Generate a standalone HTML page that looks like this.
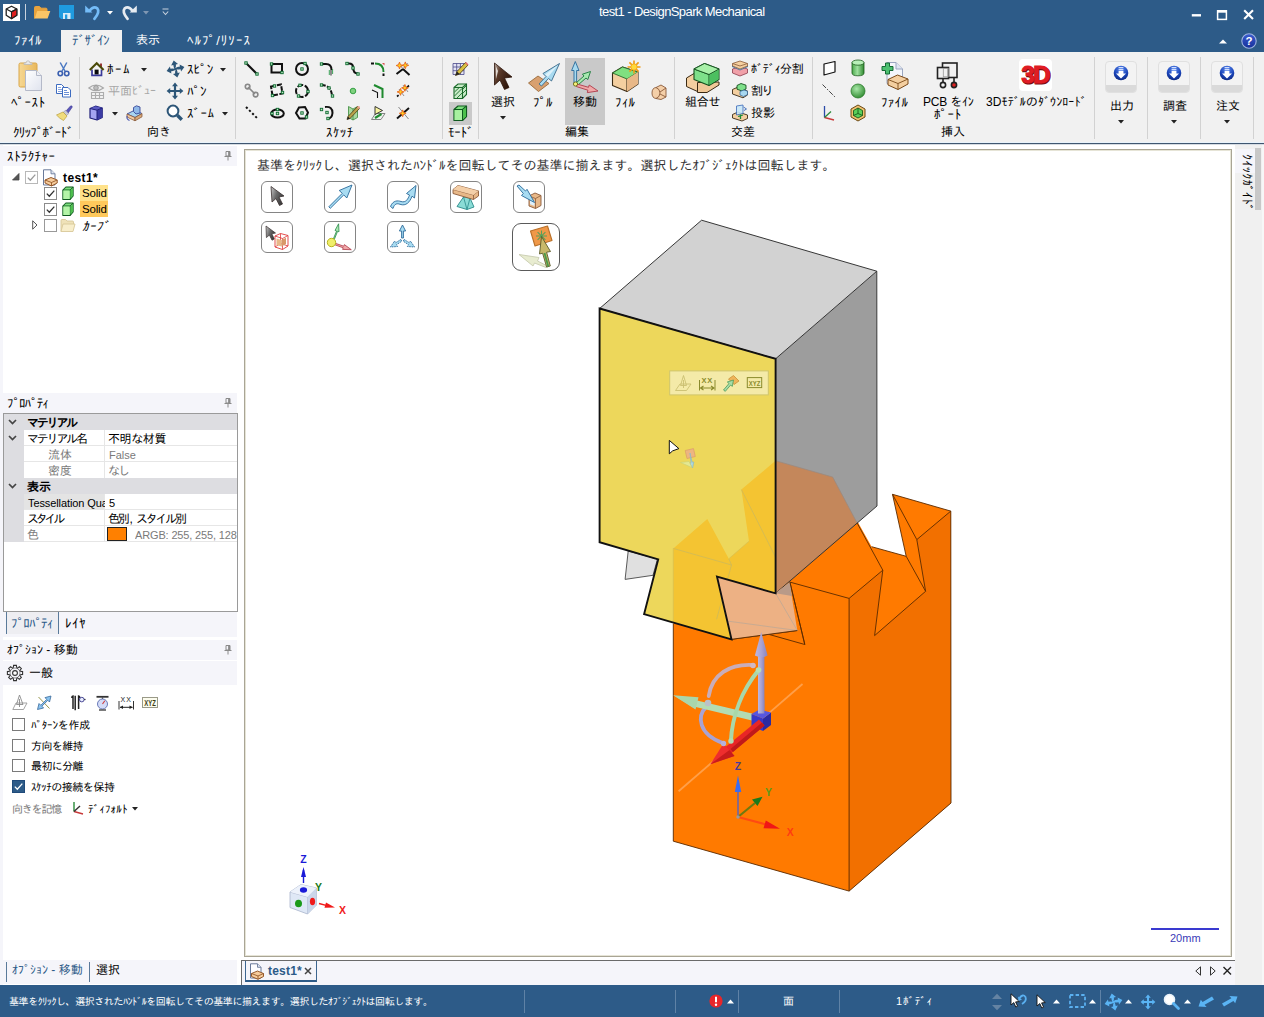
<!DOCTYPE html>
<html lang="ja">
<head>
<meta charset="utf-8">
<title>test1 - DesignSpark Mechanical</title>
<style>
*{box-sizing:border-box;margin:0;padding:0}
html,body{width:1264px;height:1017px;overflow:hidden;background:#fff}
body{position:relative;font-family:"Liberation Sans","IPAGothic",sans-serif;font-size:12px;color:#000}
.a{position:absolute}
.t{position:absolute;white-space:nowrap;line-height:1}
svg{position:absolute;overflow:visible}
#titlebar{left:0;top:0;width:1264px;height:52px;background:#2d5b88}
#ribbon{left:0;top:52px;width:1264px;height:90px;background:#f1f1f1}
#ribline{left:0;top:142px;width:1264px;height:3px;background:linear-gradient(#e9f3fb 0,#e9f3fb 1px,#3f5670 1px,#3f5670 2px,#d5dbe2 2px,#d5dbe2 3px)}
#below{left:0;top:145px;width:1264px;height:840px;background:#fff}
.sep{position:absolute;top:57px;width:1px;height:82px;background:#d2d2d2}
.w{color:#fff}
.g{color:#8a8a8a}
.hdr{position:absolute;left:3px;width:235px;height:17px;background:#eef0f6}
#status{left:0;top:985px;width:1264px;height:32px;background:#2d5b88}
</style>
</head>
<body>
<div class="a" id="titlebar"></div>
<div class="a" id="ribbon"></div>
<div class="a" id="ribline"></div>
<div class="a" id="below"></div>
<!-- title bar -->
<svg class="a" style="left:3px;top:4px" width="17" height="17" viewBox="0 0 17 17"><rect width="17" height="17" fill="#fff"/><path d="M8.5 2.2 L13.8 5 L13.8 11.2 L8.5 14.6 L3.2 11.2 L3.2 5 Z" fill="#fff" stroke="#222" stroke-width="1.3" stroke-linejoin="round"/><path d="M8.5 7.8 L13.8 5 L13.8 11.2 L8.5 14.6 Z" fill="#e02020" stroke="#222" stroke-width="1.1" stroke-linejoin="round"/><path d="M3.2 5 L8.5 7.8 L13.8 5" fill="none" stroke="#222" stroke-width="1.1"/></svg>
<div class="a" style="left:25px;top:4px;width:1px;height:16px;background:#c9d3de"></div>
<svg class="a" style="left:34px;top:6px" width="17" height="13" viewBox="0 0 17 13"><path d="M0.5 12.5 V1.5 Q0.5 0.5 1.5 0.5 H5.5 L7 2.2 H12 Q13 2.2 13 3.2 V5" fill="#e8a33d" stroke="#e8a33d"/><path d="M0.7 12.5 L3.2 5 H16.3 L13.6 12.5 Z" fill="#fbc566"/></svg>
<svg class="a" style="left:59px;top:5px" width="16" height="15" viewBox="0 0 16 15"><path d="M0 0 H15 V14 H2 L0 12 Z" fill="#1f9be0"/><rect x="4" y="8" width="7.5" height="6" fill="#d8ecf8"/><rect x="6" y="9.5" width="2.3" height="4.5" fill="#1f9be0"/></svg>
<svg class="a" style="left:84px;top:4px" width="18" height="17" viewBox="0 0 18 17"><path d="M5.5 6.8 Q9.5 1.6 13.3 4.4 Q16.2 8 10.4 14.8" fill="none" stroke="#74bcf8" stroke-width="2.7" stroke-linecap="round"/><path d="M1.2 1.6 V8.4 H8.4 Z" fill="#74bcf8"/></svg>
<svg class="a" style="left:107px;top:11px" width="6" height="4" viewBox="0 0 6 4"><path d="M0 0 H6 L3 3.4 Z" fill="#fff"/></svg>
<svg class="a" style="left:120px;top:4px" width="18" height="17" viewBox="0 0 18 17"><path d="M12.5 6.8 Q8.5 1.6 4.7 4.4 Q1.8 8 7.6 14.8" fill="none" stroke="#e6ebf1" stroke-width="2.7" stroke-linecap="round"/><path d="M16.8 1.6 V8.4 H9.6 Z" fill="#e6ebf1"/></svg>
<svg class="a" style="left:143px;top:11px" width="6" height="4" viewBox="0 0 6 4"><path d="M0 0 H6 L3 3.4 Z" fill="#7f97b2"/></svg>
<svg class="a" style="left:162px;top:8px" width="7" height="8" viewBox="0 0 7 8"><path d="M0.5 1 H6.5" stroke="#c9d3de" stroke-width="1"/><path d="M0.8 3.5 L3.5 6.5 L6.2 3.5" fill="none" stroke="#c9d3de" stroke-width="1.1"/></svg>
<div class="t w" style="left:599px;top:5px;font-size:13px;letter-spacing:-0.6px;font-family:'Liberation Sans',sans-serif" id="apptitle">test1 - DesignSpark Mechanical</div>
<svg class="a" style="left:1191px;top:9px" width="66" height="12" viewBox="0 0 66 12"><path d="M0.8 6.3 H10" stroke="#fff" stroke-width="2.4"/><rect x="26.6" y="1.8" width="8.8" height="8.6" fill="none" stroke="#fff" stroke-width="1.5"/><path d="M26 2.4 H36" stroke="#fff" stroke-width="2.6"/><path d="M53.2 1.3 L62 10 M62 1.3 L53.2 10" stroke="#fff" stroke-width="2.1"/></svg>
<!-- tabs -->
<div class="a" style="left:61px;top:30px;width:61px;height:23px;background:#f1f1f1"></div>
<div class="t w" style="left:14px;top:33.5px;font-size:13px;letter-spacing:0.5px" id="tab1">ﾌｧｲﾙ</div>
<div class="t" style="left:72px;top:33.5px;font-size:13px;letter-spacing:-0.5px;color:#2d5b88" id="tab2">ﾃﾞｻﾞｲﾝ</div>
<div class="t w" style="left:136px;top:34px" id="tab3">表示</div>
<div class="t w" style="left:187px;top:33.5px;font-size:13px;letter-spacing:1.05px" id="tab4">ﾍﾙﾌﾟ/ﾘｿｰｽ</div>
<svg class="a" style="left:1219px;top:39px" width="8" height="5" viewBox="0 0 8 5"><path d="M0 4.5 L4 0.5 L8 4.5 Z" fill="#fff"/></svg>
<svg class="a" style="left:1241px;top:33px" width="16" height="16" viewBox="0 0 16 16"><defs><linearGradient id="ghelp" x1="0" y1="0" x2="0" y2="1"><stop offset="0" stop-color="#3a5cd0"/><stop offset="1" stop-color="#16309a"/></linearGradient></defs><circle cx="8" cy="8" r="7.2" fill="url(#ghelp)" stroke="#9fb4e0" stroke-width="1.1"/><text x="8" y="12.2" font-size="11.5" font-weight="bold" fill="#fff" text-anchor="middle" font-family="Liberation Sans,sans-serif">?</text></svg>

<!-- ribbon -->
<div class="sep" style="left:79px"></div>
<div class="sep" style="left:235px"></div>
<div class="sep" style="left:442px"></div>
<div class="sep" style="left:478px"></div>
<div class="sep" style="left:674px"></div>
<div class="sep" style="left:812px"></div>
<div class="sep" style="left:1094px"></div>
<div class="sep" style="left:1147px"></div>
<div class="sep" style="left:1200px"></div>
<div class="sep" style="left:1253px"></div>
<svg class="a" style="left:18px;top:60px" width="25" height="32" viewBox="0 0 25 32"><defs><linearGradient id="gcb" x1="0" x2="1"><stop offset="0" stop-color="#f6d894"/><stop offset="1" stop-color="#e9b85c"/></linearGradient><linearGradient id="gpp" x1="0" y1="0" x2="1" y2="1"><stop offset="0" stop-color="#fff"/><stop offset="1" stop-color="#dfe3ee"/></linearGradient></defs>
<rect x="1" y="3" width="18" height="24" rx="1.5" fill="url(#gcb)" stroke="#d9a648"/>
<path d="M6 4.5 V3 H8 Q8 0.8 10 0.8 Q12 0.8 12 3 H14 V4.5 Z" fill="#e8e8e8" stroke="#b9b9b9" stroke-width="0.8"/>
<path d="M7.5 10.5 H18.5 L23.5 15.5 V30.5 H7.5 Z" fill="url(#gpp)" stroke="#b4b9c8"/><path d="M18.5 10.5 V15.5 H23.5" fill="#eef0f6" stroke="#b4b9c8"/></svg>
<div class="t" style="left:11px;top:95.5px;;font-size:13px;letter-spacing:0.50px">ﾍﾟｰｽﾄ</div>
<svg class="a" style="left:57px;top:62px" width="13" height="15" viewBox="0 0 13 15"><path d="M3.2 0.5 L8.2 9.5 M9.8 0.5 L4.8 9.5" stroke="#4a78c2" stroke-width="1.5" fill="none"/><circle cx="3.3" cy="11.5" r="2.2" fill="none" stroke="#3a5fb0" stroke-width="1.6"/><circle cx="9.7" cy="11.5" r="2.2" fill="none" stroke="#3a5fb0" stroke-width="1.6"/></svg>
<svg class="a" style="left:56px;top:84px" width="16" height="14" viewBox="0 0 16 14"><path d="M0.5 0.5 H5.5 L8 3 V9.5 H0.5 Z" fill="#fff" stroke="#3e6cc0"/><path d="M2 3.5 H5 M2 5.5 H6.5 M2 7.5 H6.5" stroke="#7a9ad8" stroke-width="0.9"/><path d="M6.5 3.5 H12 L14.5 6 V13 H6.5 Z" fill="#fff" stroke="#3e6cc0"/><path d="M8 6.5 H11 M8 8.5 H13 M8 10.5 H13" stroke="#5a82d0" stroke-width="0.9"/></svg>
<svg class="a" style="left:56px;top:105px" width="17" height="16" viewBox="0 0 17 16"><path d="M9.5 6.5 L14.5 1 Q16 0.3 16.3 2 L11.8 8.5 Z" fill="#5b57b8" stroke="#3e3a94" stroke-width="0.6"/><path d="M7.2 7.2 L9.8 5.2 L12.6 8.6 L10.6 10.6 Z" fill="#c9c9d6" stroke="#8a8aa0" stroke-width="0.6"/><path d="M0.5 10 L7 7 L11 11 L7.5 15.5 Q3.5 13.5 0.5 10 Z" fill="#f0dc7c" stroke="#b99e3c" stroke-width="0.7"/></svg>
<div class="t" style="left:13px;top:125.5px;;font-size:13px;letter-spacing:-0.75px">ｸﾘｯﾌﾟﾎﾞｰﾄﾞ</div>
<svg class="a" style="left:89px;top:61px" width="16" height="16" viewBox="0 0 16 16"><path d="M3 8.5 V14.3 H12.5 V8.5" fill="#fff" stroke="#3a3a9a" stroke-width="1.7"/><rect x="5.6" y="8.6" width="4" height="4.8" fill="#0a0a0a"/><path d="M12 2.4 V7" stroke="#8a1414" stroke-width="1.7"/><path d="M0.8 9 L7.7 2.2 L14.6 9" fill="none" stroke="#4a4a08" stroke-width="2.1" stroke-linejoin="miter"/></svg>
<div class="t" style="left:107px;top:62.5px;;font-size:13px;letter-spacing:1.50px">ﾎｰﾑ</div>
<svg class="a" style="left:141px;top:68px" width="6" height="4" viewBox="0 0 6 4"><path d="M0 0 H6 L3 3.4 Z" fill="#222"/></svg>
<svg class="a" style="left:88px;top:83px" width="17" height="16" viewBox="0 0 17 16"><path d="M0.8 5 Q8 -1 15.5 5 Q8 10.5 0.8 5 Z" fill="#ececec" stroke="#a8a8a8" stroke-width="1.1"/><circle cx="8" cy="4.8" r="2.3" fill="#bdbdbd" stroke="#9a9a9a"/><path d="M3.5 9.5 H15.5 V15.5 H3.5 Z M7.5 9.5 V15.5 M11.5 9.5 V15.5 M3.5 12.5 H15.5" fill="none" stroke="#adadad" stroke-width="1.1"/></svg>
<div class="t" style="left:108px;top:85px;color:#a7a7a7">平面ﾋﾞｭｰ</div>
<svg class="a" style="left:89px;top:105px" width="15" height="16" viewBox="0 0 15 16"><path d="M1 3.5 L6.5 1.2 L13.2 3 V12.5 L8 15 L1 13 Z" fill="#a4a4f2" stroke="#1e1e78" stroke-width="1.2" stroke-linejoin="round"/><path d="M8 5.2 L13.2 3 V12.5 L8 15 Z" fill="#3c3ca4"/><path d="M1 3.5 L6.5 1.2 L13.2 3 L8 5.2 Z" fill="#5a5ac0"/><path d="M1 3.5 L8 5.2 L13.2 3 M8 5.2 V15" fill="none" stroke="#1e1e78" stroke-width="1"/></svg>
<svg class="a" style="left:112px;top:112px" width="6" height="4" viewBox="0 0 6 4"><path d="M0 0 H6 L3 3.4 Z" fill="#222"/></svg>
<svg class="a" style="left:126px;top:105px" width="18" height="17" viewBox="0 0 18 17"><path d="M1 9 L8 5.5 L16 8.5 L9 12.5 Z" fill="#a8d4f0" stroke="#3a4a9a" stroke-width="0.9"/><path d="M1 9 V12 L9 15.8 V12.5 Z" fill="#f0c8a0" stroke="#8a5a3a" stroke-width="0.8"/><path d="M9 12.5 V15.8 L16 11.8 V8.5 Z" fill="#d8a878" stroke="#8a5a3a" stroke-width="0.8"/><path d="M7.5 2.5 L10.5 0.8 L14 2 V8 L10 9 L7.5 6.5 Z" fill="#8fb8e8" stroke="#3a4a9a" stroke-width="0.9"/><path d="M1.2 11 Q0 14 3.5 15.5" fill="none" stroke="#4a58b0" stroke-width="1.1"/></svg>
<svg class="a" style="left:166px;top:60px" width="19" height="18" viewBox="0 0 19 18"><g transform="rotate(-12 9.5 9)" fill="#2d5678"><path d="M9.5 0.4 L13 4.6 H10.8 Q10.9 6.6 9.6 7.9 Q11.6 7.4 14.4 7.6 V5.4 L18.6 9 L14.4 12.6 V10.4 Q12 10.3 10.6 9.4 Q11 11.4 10.8 13.4 H13 L9.5 17.6 L6 13.4 H8.2 Q8.2 11.4 9.4 10.1 Q7.4 10.6 4.6 10.4 V12.6 L0.4 9 L4.6 5.4 V7.6 Q7 7.7 8.4 8.6 Q8 6.6 8.2 4.6 H6 Z"/></g></svg>
<div class="t" style="left:187px;top:62.5px;;font-size:13px;letter-spacing:0.10px">ｽﾋﾟﾝ</div>
<svg class="a" style="left:220px;top:68px" width="6" height="4" viewBox="0 0 6 4"><path d="M0 0 H6 L3 3.4 Z" fill="#222"/></svg>
<svg class="a" style="left:166px;top:82px" width="18" height="18" viewBox="0 0 18 18"><path d="M9 0.6 L12 4.2 H10.1 V7.9 H13.8 V6 L17.4 9 L13.8 12 V10.1 H10.1 V13.8 H12 L9 17.4 L6 13.8 H7.9 V10.1 H4.2 V12 L0.6 9 L4.2 6 V7.9 H7.9 V4.2 H6 Z" fill="#2d5678"/></svg>
<div class="t" style="left:187px;top:84.5px;;font-size:13px;letter-spacing:0.00px">ﾊﾟﾝ</div>
<svg class="a" style="left:166px;top:104px" width="18" height="18" viewBox="0 0 18 18"><circle cx="7" cy="7" r="5.4" fill="#fff" stroke="#2d5678" stroke-width="2"/><path d="M11.3 11.3 L15.8 15.8" stroke="#2d5678" stroke-width="3.4" stroke-linecap="butt"/></svg>
<div class="t" style="left:187px;top:106.5px;;font-size:13px;letter-spacing:0.50px">ｽﾞｰﾑ</div>
<svg class="a" style="left:222px;top:112px" width="6" height="4" viewBox="0 0 6 4"><path d="M0 0 H6 L3 3.4 Z" fill="#222"/></svg>
<div class="t" style="left:147px;top:126px;">向き</div>
<!-- sketch -->
<svg class="a" style="left:244px;top:61px" width="16" height="16" viewBox="0 0 16 16"><path d="M2 2 L13 13" stroke="#111" stroke-width="2" fill="none"/><rect x="0.8" y="0.8" width="2.4" height="2.4" fill="#bfe3c4" stroke="#0b6b2e" stroke-width="0.9"/><rect x="11.8" y="11.8" width="2.4" height="2.4" fill="#bfe3c4" stroke="#0b6b2e" stroke-width="0.9"/></svg>
<svg class="a" style="left:269px;top:61px" width="16" height="16" viewBox="0 0 16 16"><rect x="2.5" y="3" width="10.5" height="8.5" stroke="#111" stroke-width="2" fill="none"/><rect x="1.3" y="1.8" width="2.4" height="2.4" fill="#bfe3c4" stroke="#0b6b2e" stroke-width="0.9"/><rect x="11.8" y="10.3" width="2.4" height="2.4" fill="#bfe3c4" stroke="#0b6b2e" stroke-width="0.9"/></svg>
<svg class="a" style="left:294px;top:61px" width="16" height="16" viewBox="0 0 16 16"><circle cx="8" cy="8" r="6" stroke="#111" stroke-width="2" fill="none"/><rect x="6.8" y="6.8" width="2.4" height="2.4" fill="#bfe3c4" stroke="#0b6b2e" stroke-width="0.9"/><rect x="9.8" y="1.3" width="2.4" height="2.4" fill="#bfe3c4" stroke="#0b6b2e" stroke-width="0.9"/></svg>
<svg class="a" style="left:319px;top:61px" width="16" height="16" viewBox="0 0 16 16"><path d="M2.5 3 H7 Q12.5 3 12.5 9" stroke="#111" stroke-width="2" fill="none"/><path d="M10.3 9 V14 M13.6 8 V13" stroke="#2a9a4a" stroke-width="0.9"/><path d="M12 9 V14.5" stroke="#555" stroke-width="1.3"/><rect x="1.3" y="1.8" width="2.4" height="2.4" fill="#bfe3c4" stroke="#0b6b2e" stroke-width="0.9"/></svg>
<svg class="a" style="left:345px;top:61px" width="16" height="16" viewBox="0 0 16 16"><path d="M2 2.5 H4 Q8 2.5 8 6 Q8 12.5 13 12.5" stroke="#111" stroke-width="2" fill="none"/><rect x="0.8" y="1.3" width="2.4" height="2.4" fill="#bfe3c4" stroke="#0b6b2e" stroke-width="0.9"/><rect x="6.8" y="5.8" width="2.4" height="2.4" fill="#bfe3c4" stroke="#0b6b2e" stroke-width="0.9"/><rect x="11.8" y="11.8" width="2.4" height="2.4" fill="#bfe3c4" stroke="#0b6b2e" stroke-width="0.9"/></svg>
<svg class="a" style="left:370px;top:61px" width="16" height="16" viewBox="0 0 16 16"><path d="M1 2.5 H4" stroke="#111" stroke-width="2" fill="none"/><path d="M5 2.5 Q13.5 2.5 13.5 11" fill="none" stroke="#1f8a2f" stroke-width="1.9"/><path d="M13.5 12.5 V15" stroke="#111" stroke-width="2" fill="none"/><path d="M12 2 L14.5 2 L14.5 4.5 Z" fill="#d9534f"/></svg>
<svg class="a" style="left:395px;top:61px" width="16" height="16" viewBox="0 0 16 16"><path d="M1.5 13 L8 8 L14.5 14" stroke="#111" stroke-width="2" fill="none"/><path d="M4 2.5 L8 8 L12.5 2" fill="none" stroke="#888" stroke-width="1"/><path d="M3.6 3.6 l0.9 -2.5 l0.9 2.5 l2.5 0.9 l-2.5 0.9 l-0.9 2.5 l-0.9 -2.5 l-2.5 -0.9 Z" fill="#ffd21e" stroke="#e8641e" stroke-width="0.9"/><path d="M9.4 3.4 l0.9 -2.5 l0.9 2.5 l2.5 0.9 l-2.5 0.9 l-0.9 2.5 l-0.9 -2.5 l-2.5 -0.9 Z" fill="#ffd21e" stroke="#e8641e" stroke-width="0.9"/></svg>
<svg class="a" style="left:244px;top:83px" width="16" height="16" viewBox="0 0 16 16"><path d="M4 4 L11 11" stroke="#888" stroke-width="1.7"/><circle cx="3.6" cy="3.6" r="2.3" fill="none" stroke="#888" stroke-width="1.6"/><circle cx="11.6" cy="11.6" r="2.3" fill="none" stroke="#888" stroke-width="1.6"/></svg>
<svg class="a" style="left:269px;top:83px" width="16" height="16" viewBox="0 0 16 16"><path d="M2 3.5 L12 1.5 L13.5 10.5 L3.5 12.5 Z" stroke="#111" stroke-width="2" fill="none" stroke-dasharray="4.5 1.5"/><rect x="4.3" y="1.8" width="2.4" height="2.4" fill="#bfe3c4" stroke="#0b6b2e" stroke-width="0.9"/><rect x="12.3" y="8.3" width="2.4" height="2.4" fill="#bfe3c4" stroke="#0b6b2e" stroke-width="0.9"/><rect x="2.3" y="11.3" width="2.4" height="2.4" fill="#bfe3c4" stroke="#0b6b2e" stroke-width="0.9"/></svg>
<svg class="a" style="left:294px;top:83px" width="16" height="16" viewBox="0 0 16 16"><circle cx="8" cy="8" r="6" stroke="#111" stroke-width="2" fill="none" stroke-dasharray="6 1.6"/><rect x="4.8" y="1.0999999999999999" width="2.4" height="2.4" fill="#bfe3c4" stroke="#0b6b2e" stroke-width="0.9"/><rect x="12.8" y="7.3" width="2.4" height="2.4" fill="#bfe3c4" stroke="#0b6b2e" stroke-width="0.9"/><rect x="3.3" y="11.8" width="2.4" height="2.4" fill="#bfe3c4" stroke="#0b6b2e" stroke-width="0.9"/></svg>
<svg class="a" style="left:319px;top:83px" width="16" height="16" viewBox="0 0 16 16"><path d="M2.5 2 Q12.5 2.5 13 13" stroke="#111" stroke-width="2" fill="none" stroke-dasharray="4.2 1.4"/><rect x="1.3" y="0.8" width="2.4" height="2.4" fill="#bfe3c4" stroke="#0b6b2e" stroke-width="0.9"/><rect x="8.8" y="3.8" width="2.4" height="2.4" fill="#bfe3c4" stroke="#0b6b2e" stroke-width="0.9"/><rect x="12.3" y="11.8" width="2.4" height="2.4" fill="#bfe3c4" stroke="#0b6b2e" stroke-width="0.9"/></svg>
<svg class="a" style="left:345px;top:83px" width="16" height="16" viewBox="0 0 16 16"><circle cx="8" cy="8" r="2.8" fill="#7ed07e" stroke="#2a9a3a" stroke-width="0.9"/></svg>
<svg class="a" style="left:370px;top:83px" width="16" height="16" viewBox="0 0 16 16"><path d="M4 2 L12.5 6 V15" fill="none" stroke="#1f8a2f" stroke-width="2"/><path d="M2 7 L7.5 9.5 V15" fill="none" stroke="#111" stroke-width="1.1"/></svg>
<svg class="a" style="left:395px;top:83px" width="16" height="16" viewBox="0 0 16 16"><path d="M2 13.5 L14 2.5" stroke="#111" stroke-width="1.7" stroke-dasharray="2.2 7.5 5 0"/><path d="M4 6 L9 13 M8 2 L13 9" stroke="#888" stroke-width="0.9"/><path d="M4.6 8 l0.9 -2.5 l0.9 2.5 l2.5 0.9 l-2.5 0.9 l-0.9 2.5 l-0.9 -2.5 l-2.5 -0.9 Z" fill="#ffd21e" stroke="#e8641e" stroke-width="0.9"/><path d="M9 4 l0.9 -2.5 l0.9 2.5 l2.5 0.9 l-2.5 0.9 l-0.9 2.5 l-0.9 -2.5 l-2.5 -0.9 Z" fill="#ffd21e" stroke="#e8641e" stroke-width="0.9"/></svg>
<svg class="a" style="left:244px;top:105px" width="16" height="16" viewBox="0 0 16 16"><path d="M2 2 L13.5 13.5" stroke="#111" stroke-width="2" fill="none" stroke-dasharray="2.2 2.2"/></svg>
<svg class="a" style="left:269px;top:105px" width="16" height="16" viewBox="0 0 16 16"><ellipse cx="8.5" cy="8.5" rx="6.3" ry="4" stroke="#111" stroke-width="2" fill="none"/><rect x="7.3" y="3.3" width="2.4" height="2.4" fill="#bfe3c4" stroke="#0b6b2e" stroke-width="0.9"/><rect x="1.8" y="7.3" width="2.4" height="2.4" fill="#bfe3c4" stroke="#0b6b2e" stroke-width="0.9"/><rect x="7.3" y="7.3" width="2.4" height="2.4" fill="#bfe3c4" stroke="#0b6b2e" stroke-width="0.9"/></svg>
<svg class="a" style="left:294px;top:105px" width="16" height="16" viewBox="0 0 16 16"><path d="M5 2.5 L11 2 L14 7.5 L11.5 13.5 L5.5 13.5 L2 8 Z" stroke="#111" stroke-width="2" fill="none"/><rect x="6.8" y="6.8" width="2.4" height="2.4" fill="#bfe3c4" stroke="#0b6b2e" stroke-width="0.9"/><rect x="11.3" y="10.8" width="2.4" height="2.4" fill="#bfe3c4" stroke="#0b6b2e" stroke-width="0.9"/></svg>
<svg class="a" style="left:319px;top:105px" width="16" height="16" viewBox="0 0 16 16"><path d="M6 2 Q13.5 1 13.5 8 Q13 13 9.5 13.5" stroke="#111" stroke-width="2" fill="none"/><rect x="1.3" y="3.3" width="2.4" height="2.4" fill="#bfe3c4" stroke="#0b6b2e" stroke-width="0.9"/><rect x="6.8" y="6.3" width="2.4" height="2.4" fill="#bfe3c4" stroke="#0b6b2e" stroke-width="0.9"/><rect x="7.8" y="12.3" width="2.4" height="2.4" fill="#bfe3c4" stroke="#0b6b2e" stroke-width="0.9"/></svg>
<svg class="a" style="left:345px;top:105px" width="16" height="16" viewBox="0 0 16 16"><path d="M3.5 1.5 L8 4 V15 L3.5 12.5 Z M8 4 L12.5 1.5 V12.5 L8 15" fill="#a8d8a0" stroke="#3a8a3a" stroke-width="0.8"/><path d="M2 14.5 L3 11.5 L12.5 1.5 L14.5 3.5 L5 13.5 Z" fill="#b9a24a" stroke="#4a3a14" stroke-width="0.8"/><path d="M2 14.5 L3 11.5 L5 13.5 Z" fill="#222"/><circle cx="13.6" cy="2.4" r="1.3" fill="#e8a090"/></svg>
<svg class="a" style="left:370px;top:105px" width="16" height="16" viewBox="0 0 16 16"><path d="M1.5 14.5 L5.5 8.5 H15 L11 14.5 Z" fill="#eef3ee" stroke="#777" stroke-width="0.9"/><path d="M5 1.5 L12.5 5.5 L5 9.5 Z" fill="#f7f3a0" stroke="#222" stroke-width="0.9"/><path d="M5 13 L11.5 9" stroke="#1f8a2f" stroke-width="2.2"/></svg>
<svg class="a" style="left:395px;top:105px" width="16" height="16" viewBox="0 0 16 16"><path d="M2 13.5 L14 3" stroke="#111" stroke-width="1.9"/><path d="M3.5 2 L13.5 14" stroke="#888" stroke-width="1"/><path d="M6.8 7.4 l0.9 -2.5 l0.9 2.5 l2.5 0.9 l-2.5 0.9 l-0.9 2.5 l-0.9 -2.5 l-2.5 -0.9 Z" fill="#ffd21e" stroke="#e8641e" stroke-width="0.9"/></svg>
<div class="t" style="left:326px;top:125.5px;;font-size:13px;letter-spacing:0.40px">ｽｹｯﾁ</div>
<div class="a" style="left:449px;top:102px;width:23px;height:23px;background:#c9c9c9"></div>
<svg class="a" style="left:452px;top:61px" width="17" height="17" viewBox="0 0 17 17"><path d="M1 2.5 H12 V13.5 H1 Z M1 6 H12 M1 9.7 H12 M4.7 2.5 V13.5 M8.4 2.5 V13.5" fill="#e4e4f4" stroke="#4a4a8a" stroke-width="0.8"/><path d="M3.5 14.5 L5 10.5 L13.5 1.5 L16 4 L7.5 13 Z" fill="#d8c040" stroke="#4a3a14" stroke-width="0.8"/><path d="M3.5 14.5 L5 10.5 L7.5 13 Z" fill="#222"/><path d="M13.5 1.5 L16 4" stroke="#e06a6a" stroke-width="1.6"/></svg>
<svg class="a" style="left:453px;top:83px" width="15" height="17" viewBox="0 0 15 17"><path d="M1 4.5 L5 1 H13.5 V11.5 L9.5 15.5 H1 Z" fill="#c8ecc8" stroke="#1a6a2a" stroke-width="1.1"/><path d="M1 4.5 H9.5 V15.5 M9.5 4.5 L13.5 1" fill="none" stroke="#1a6a2a" stroke-width="1.1"/><path d="M1.5 9 L6 4.8 M1.5 13 L9 5.5 M4 15 L9.3 9.8 M10 6 L13 3 M10 10 L13 7" stroke="#1a6a2a" stroke-width="0.9"/></svg>
<svg class="a" style="left:453px;top:105px" width="15" height="17" viewBox="0 0 15 17"><path d="M1 4.5 L5 1 H13.5 V11.5 L9.5 15.5 H1 Z" fill="#7ee07e" stroke="#0f5a1f" stroke-width="1.2" stroke-linejoin="round"/><path d="M1 4.5 H9.5 V15.5 M9.5 4.5 L13.5 1" fill="none" stroke="#0f5a1f" stroke-width="1.1"/><path d="M1.6 5.1 H9 V15 H1.6 Z" fill="#a8f0a0"/><path d="M10 5 L13 2.2 V11.3 L10 14.3 Z" fill="#4cc04c"/></svg>
<div class="t" style="left:448px;top:125.5px;;font-size:13px;letter-spacing:-0.20px">ﾓｰﾄﾞ</div>
<!-- edit -->
<div class="a" style="left:565px;top:58px;width:40px;height:67px;background:#c9c9c9"></div>
<svg class="a" style="left:493px;top:62px" width="21" height="29" viewBox="0 0 21 29"><defs><linearGradient id="gsel" x1="0" y1="0" x2="1" y2="0.6"><stop offset="0" stop-color="#b8aaa0"/><stop offset="0.35" stop-color="#5a3a2a"/><stop offset="1" stop-color="#2a1208"/></linearGradient></defs><path d="M1.5 1 L19 15 L11.5 16 L16 25.5 L11.5 27.5 L7 18 L1.5 23 Z" fill="url(#gsel)" stroke="#2a1208" stroke-width="0.8" stroke-linejoin="round"/><path d="M3 4.5 L3 17 L5 9 Z" fill="#f4f0ec" opacity="0.85"/></svg>
<div class="t" style="left:491px;top:96px;">選択</div>
<svg class="a" style="left:500px;top:116px" width="6" height="4" viewBox="0 0 6 4"><path d="M0 0 H6 L3 3.4 Z" fill="#222"/></svg>
<svg class="a" style="left:527px;top:62px" width="34" height="31" viewBox="0 0 34 31"><path d="M1.5 21 L11 14 L22 21.5 L11.5 29.5 Z" fill="#d8a070" stroke="#9a6a3a" stroke-width="0.9"/><path d="M12 22 L19 14.5 L16 11.5 L32.5 1.5 L24.5 19 L21.5 16.5 L14.5 24 Z" fill="#a8daf0" stroke="#3a6a8a" stroke-width="0.9" stroke-linejoin="round"/><path d="M18 12.5 L31 3 L21 15 Z" fill="#e8f6fc" opacity="0.8"/></svg>
<div class="t" style="left:533px;top:95.5px;;font-size:13px;letter-spacing:0.00px">ﾌﾟﾙ</div>
<svg class="a" style="left:568px;top:60px" width="32" height="34" viewBox="0 0 32 34"><path d="M6 23 V10.5 H3.6 L7.3 1.5 L11 10.5 H8.6 V23 Z" fill="#a8daf0" stroke="#2a6a9a" stroke-width="0.9"/><path d="M8.5 22.5 L16 16 L14.4 14.2 L22.5 11.5 L19.8 19.6 L18 18 L10 25 Z" fill="#a8e8b0" stroke="#1a7a3a" stroke-width="0.9"/><path d="M9 24 L20.5 27.3 L21.2 25 L30 31 L19.3 32.6 L19.9 30.2 L8.5 26.6 Z" fill="#f0a8a8" stroke="#b03a4a" stroke-width="0.9"/><circle cx="7.5" cy="24" r="2.1" fill="#f4f07a" stroke="#6a6a14" stroke-width="0.9"/></svg>
<div class="t" style="left:573px;top:96px;">移動</div>
<svg class="a" style="left:611px;top:59px" width="33" height="34" viewBox="0 0 33 34"><path d="M1.5 14 L11.5 8 L27 13 V25 L16 32.5 L1.5 26.5 Z" fill="#f4cfa0" stroke="#3a2a14" stroke-width="1.1" stroke-linejoin="round"/><path d="M1.5 14 L11.5 8 L27 13 L16 20 Z" fill="#80e080" stroke="#2a6a2a" stroke-width="0.9"/><path d="M16 20 V32.5" stroke="#3a2a14" stroke-width="1.1"/><path d="M16 20 L27 13 V25 L16 32.5 Z" fill="#e8b888"/><g stroke="#f09a14" stroke-width="1.6"><path d="M23 1.5 V14.5 M16.5 8 H29.5 M18.4 3.4 L27.6 12.6 M27.6 3.4 L18.4 12.6"/></g><circle cx="23" cy="8" r="3.2" fill="#ffd83a" stroke="#f0a014" stroke-width="0.8"/></svg>
<div class="t" style="left:615px;top:95.5px;;font-size:13px;letter-spacing:0.20px">ﾌｨﾙ</div>
<svg class="a" style="left:651px;top:84px" width="16" height="17" viewBox="0 0 16 17"><path d="M1 9 Q1 4 5 3.5 L10 1 L15 4 V13 L10 15.5 L5 14.5 Q1 14 1 9 Z" fill="#f4cfa8" stroke="#8a5a3a" stroke-width="0.9"/><path d="M5 3.5 Q9 5 9 9 Q9 13 5 14.5 M9 8 L15 4 M9 10 L15 13" fill="none" stroke="#8a5a3a" stroke-width="0.9"/></svg>
<div class="t" style="left:565px;top:126px;">編集</div>
<!-- intersect -->
<svg class="a" style="left:685px;top:62px" width="36" height="32" viewBox="0 0 36 32"><path d="M1.5 16 L9 11.5 L20 15.5 V24 L12.5 29.5 L1.5 24.5 Z" fill="#f4cfa0" stroke="#3a2a14" stroke-width="1" stroke-linejoin="round"/><path d="M12.5 20.5 L34 20 V23 L22 30.5 H12.5 Z" fill="#f0c898" stroke="#3a2a14" stroke-width="1"/><path d="M9 7 L19.5 1.5 L34 7 V17.5 L24 23.5 L9 17.5 Z" fill="#7ee08a" stroke="#14501e" stroke-width="1.1" stroke-linejoin="round"/><path d="M9 7 L24 12.5 L34 7 M24 12.5 V23.5" fill="none" stroke="#14501e" stroke-width="1"/><path d="M9 7 L19.5 1.5 L34 7 L24 12.5 Z" fill="#a8f0a8" stroke="#14501e" stroke-width="0.9"/><path d="M24.5 13 L33.5 7.8 V17.2 L24.5 22.8 Z" fill="#4cc060"/></svg>
<div class="t" style="left:685px;top:96px;letter-spacing:-0.3px">組合せ</div>
<svg class="a" style="left:731px;top:60px" width="18" height="17" viewBox="0 0 18 17"><path d="M1.5 9 L9 6.5 L16.5 9 V13 L9 16 L1.5 13 Z" fill="#f0a0a8" stroke="#8a3a4a" stroke-width="0.8"/><path d="M1 6.5 L9 3.8 L17 6.5 L9 10 Z" fill="#a8d8f0" stroke="#3a6a9a" stroke-width="0.8"/><path d="M1.5 3.5 L9 1 L16.5 3.5 V6 L9 9 L1.5 6 Z" fill="#f4cfa0" stroke="#8a5a3a" stroke-width="0.8"/><path d="M1.5 3.5 L9 6 L16.5 3.5" fill="none" stroke="#8a5a3a" stroke-width="0.8"/></svg>
<div class="t" style="left:751px;top:63px;letter-spacing:-0.3px">ﾎﾞﾃﾞｨ分割</div>
<svg class="a" style="left:731px;top:82px" width="18" height="17" viewBox="0 0 18 17"><path d="M1.5 7.5 L6 5.5 L16.5 9 V13 L12 15.8 L1.5 12 Z" fill="#f4cfa0" stroke="#3a2a14" stroke-width="0.9"/><path d="M6 3.5 L10 1.5 L15 3.2 V7 L11 9 L6 7.2 Z" fill="#7ee08a" stroke="#14501e" stroke-width="0.9"/><path d="M9 9.5 L13 8 L16.5 9.2 V12.6 L12.5 14.5 L9 13 Z" fill="#a8d8f0" stroke="#3a6a9a" stroke-width="0.8"/></svg>
<div class="t" style="left:751px;top:85px;letter-spacing:-1.5px">割り</div>
<svg class="a" style="left:731px;top:104px" width="18" height="18" viewBox="0 0 18 18"><path d="M1.5 10.5 L7 8 L16.5 11 V14.5 L11 17 L1.5 14 Z" fill="#f4cfa0" stroke="#3a2a14" stroke-width="0.9"/><path d="M5.5 2 L12 1 V9.5 L5.5 11 Z" fill="#c8e8f8" stroke="#3a6aba" stroke-width="0.9" opacity="0.9"/><path d="M7 12.5 L12 11 M9.5 10.5 V15" stroke="#1a8a3a" stroke-width="1.3"/><path d="M12.5 3 L15.5 5 L13 6.5" fill="none" stroke="#3a6aba" stroke-width="0.9"/></svg>
<div class="t" style="left:751px;top:107px;">投影</div>
<div class="t" style="left:731px;top:126px;">交差</div>
<!-- insert -->
<svg class="a" style="left:822px;top:60px" width="15" height="16" viewBox="0 0 15 16"><path d="M2 4 L13 1.5 V12 L2 15 Z" fill="#fff" stroke="#111" stroke-width="1.2" stroke-linejoin="round"/></svg>
<svg class="a" style="left:821px;top:83px" width="16" height="16" viewBox="0 0 16 16"><path d="M1.5 1.5 L14.5 14.5" stroke="#444" stroke-width="1" stroke-dasharray="5 1.5 1.5 1.5"/></svg>
<svg class="a" style="left:822px;top:105px" width="14" height="16" viewBox="0 0 14 16"><path d="M2.5 1 V12.5" stroke="#2a4aa8" stroke-width="1.3"/><path d="M2.5 12.5 L12 15" stroke="#c83a3a" stroke-width="1.3"/><path d="M2.5 12.5 L9 6.5" stroke="#2a8a3a" stroke-width="1.3"/></svg>
<svg class="a" style="left:851px;top:59px" width="14" height="18" viewBox="0 0 14 18"><defs><linearGradient id="gcy" x1="0" x2="1"><stop offset="0" stop-color="#4aa84a"/><stop offset="0.45" stop-color="#9ee09e"/><stop offset="1" stop-color="#2f8a2f"/></linearGradient><radialGradient id="gsp" cx="0.4" cy="0.35" r="0.7"><stop offset="0" stop-color="#a8e8a8"/><stop offset="1" stop-color="#2f8a2f"/></radialGradient></defs><path d="M1 3.5 V14 Q1 16.8 7 16.8 Q13 16.8 13 14 V3.5 Z" fill="url(#gcy)" stroke="#1a5a1a" stroke-width="0.8"/><ellipse cx="7" cy="3.6" rx="6" ry="2.6" fill="#b8f0b8" stroke="#1a5a1a" stroke-width="0.8"/></svg>
<svg class="a" style="left:850px;top:83px" width="16" height="16" viewBox="0 0 16 16"><circle cx="8" cy="8" r="7" fill="url(#gsp)" stroke="#2a7a2a" stroke-width="0.8"/></svg>
<svg class="a" style="left:850px;top:104px" width="16" height="18" viewBox="0 0 16 18"><path d="M8 1 L15 5 V13 L8 17 L1 13 V5 Z" fill="#f0c070" stroke="#6a4a14" stroke-width="1"/><path d="M8 4 L12.5 6.5 V11.5 L8 14 L3.5 11.5 V6.5 Z" fill="#5ad05a" stroke="#1a5a1a" stroke-width="0.9"/><path d="M8 4 V9.5 L12.5 11.5 M8 9.5 L3.5 11.5" fill="none" stroke="#1a5a1a" stroke-width="0.9"/></svg>
<svg class="a" style="left:881px;top:61px" width="28" height="30" viewBox="0 0 28 30"><path d="M6 1.5 H15 L21.5 8 V22.5 H6 Z" fill="#f4f6fb" stroke="#9aa6c0" stroke-width="1"/><path d="M15 1.5 V8 H21.5" fill="#dfe5f2" stroke="#9aa6c0" stroke-width="1"/><path d="M7 18.5 L16.5 14 L27 18 V23 L17 28.5 L7 24 Z" fill="#f4cfa0" stroke="#7a4a1a" stroke-width="1" stroke-linejoin="round"/><path d="M7 18.5 L17 22.5 L27 18 M17 22.5 V28.5" fill="none" stroke="#7a4a1a" stroke-width="0.9"/><path d="M4.5 2 H8.5 V5.5 H12 V9.5 H8.5 V13 H4.5 V9.5 H1 V5.5 H4.5 Z" fill="#4cc070" stroke="#146a34" stroke-width="1"/></svg>
<div class="t" style="left:881px;top:95.5px;;font-size:13px;letter-spacing:0.30px">ﾌｧｲﾙ</div>
<svg class="a" style="left:935px;top:61px" width="28" height="30" viewBox="0 0 28 30"><rect x="7.5" y="2" width="14.5" height="14.5" fill="none" stroke="#222" stroke-width="1.6"/><rect x="2.5" y="6.5" width="11" height="11" fill="#f1f1f1" stroke="#222" stroke-width="1.6"/><rect x="8.3" y="7.3" width="5" height="8.5" fill="none" stroke="#999" stroke-width="0.8"/><path d="M8 17.5 V21 M19 16.5 V21" stroke="#222" stroke-width="1.6"/><circle cx="8" cy="24" r="2.6" fill="#f1f1f1" stroke="#222" stroke-width="1.6"/><circle cx="19" cy="24" r="2.6" fill="#e02020" stroke="#222" stroke-width="1.6"/></svg>
<div class="t" style="left:923px;top:96px;letter-spacing:-0.2px">PCB をｲﾝ</div>
<div class="t" style="left:934px;top:107.5px;;font-size:13px;letter-spacing:0.50px">ﾎﾟｰﾄ</div>
<svg class="a" style="left:1019px;top:59px" width="33" height="32" viewBox="0 0 33 32"><rect x="0" y="0" width="33" height="32" rx="4" fill="#fff"/><text x="16.8" y="24.5" text-anchor="middle" font-family="Liberation Sans,sans-serif" font-weight="bold" font-size="24" letter-spacing="-1.5" fill="#7a0c10" stroke="#7a0c10" stroke-width="1.2">3D</text><text x="16" y="23.5" text-anchor="middle" font-family="Liberation Sans,sans-serif" font-weight="bold" font-size="24" letter-spacing="-1.5" fill="#e01c24" stroke="#e01c24" stroke-width="0.8">3D</text></svg>
<div class="t" style="left:986px;top:96px;letter-spacing:0.1px">3Dﾓﾃﾞﾙのﾀﾞｳﾝﾛｰﾄﾞ</div>
<div class="t" style="left:941px;top:126px;">挿入</div>
<div class="a" style="left:1105px;top:61px;width:32px;height:32px;border-radius:4px;background:#f3f3f3;border:1px solid #e0e0e0;overflow:hidden"><div class="a" style="left:0;top:23px;width:32px;height:9px;background:#dadada"></div></div>
<svg class="a" style="left:1113px;top:65px" width="16" height="16" viewBox="0 0 16 16"><defs><radialGradient id="gdl0" cx="0.5" cy="0.25" r="0.8"><stop offset="0" stop-color="#5a8af0"/><stop offset="0.6" stop-color="#1a44b8"/><stop offset="1" stop-color="#0a2478"/></radialGradient></defs><circle cx="8" cy="8" r="7.3" fill="url(#gdl0)"/><path d="M5.6 2.6 H10.4 M5.6 4.4 H10.4" stroke="#dfe8ff" stroke-width="1"/><path d="M5.6 5.8 H10.4 V8.5 H13 L8 13.6 L3 8.5 H5.6 Z" fill="#fff"/></svg>
<div class="t" style="left:1110px;top:100px;">出力</div>
<svg class="a" style="left:1118px;top:120px" width="6" height="4" viewBox="0 0 6 4"><path d="M0 0 H6 L3 3.4 Z" fill="#222"/></svg>
<div class="a" style="left:1158px;top:61px;width:32px;height:32px;border-radius:4px;background:#f3f3f3;border:1px solid #e0e0e0;overflow:hidden"><div class="a" style="left:0;top:23px;width:32px;height:9px;background:#dadada"></div></div>
<svg class="a" style="left:1166px;top:65px" width="16" height="16" viewBox="0 0 16 16"><defs><radialGradient id="gdl1" cx="0.5" cy="0.25" r="0.8"><stop offset="0" stop-color="#5a8af0"/><stop offset="0.6" stop-color="#1a44b8"/><stop offset="1" stop-color="#0a2478"/></radialGradient></defs><circle cx="8" cy="8" r="7.3" fill="url(#gdl1)"/><path d="M5.6 2.6 H10.4 M5.6 4.4 H10.4" stroke="#dfe8ff" stroke-width="1"/><path d="M5.6 5.8 H10.4 V8.5 H13 L8 13.6 L3 8.5 H5.6 Z" fill="#fff"/></svg>
<div class="t" style="left:1163px;top:100px;">調査</div>
<svg class="a" style="left:1171px;top:120px" width="6" height="4" viewBox="0 0 6 4"><path d="M0 0 H6 L3 3.4 Z" fill="#222"/></svg>
<div class="a" style="left:1211px;top:61px;width:32px;height:32px;border-radius:4px;background:#f3f3f3;border:1px solid #e0e0e0;overflow:hidden"><div class="a" style="left:0;top:23px;width:32px;height:9px;background:#dadada"></div></div>
<svg class="a" style="left:1219px;top:65px" width="16" height="16" viewBox="0 0 16 16"><defs><radialGradient id="gdl2" cx="0.5" cy="0.25" r="0.8"><stop offset="0" stop-color="#5a8af0"/><stop offset="0.6" stop-color="#1a44b8"/><stop offset="1" stop-color="#0a2478"/></radialGradient></defs><circle cx="8" cy="8" r="7.3" fill="url(#gdl2)"/><path d="M5.6 2.6 H10.4 M5.6 4.4 H10.4" stroke="#dfe8ff" stroke-width="1"/><path d="M5.6 5.8 H10.4 V8.5 H13 L8 13.6 L3 8.5 H5.6 Z" fill="#fff"/></svg>
<div class="t" style="left:1216px;top:100px;">注文</div>
<svg class="a" style="left:1224px;top:120px" width="6" height="4" viewBox="0 0 6 4"><path d="M0 0 H6 L3 3.4 Z" fill="#222"/></svg>

<!-- left panel -->
<div class="a" style="left:0;top:145px;width:3px;height:840px;background:#f5f5fa"></div>
<div class="a" style="left:3px;top:146px;width:234px;height:20px;background:#f5f5fa"></div>
<div class="t" style="left:7px;top:149.5px;;font-size:13px;letter-spacing:0.40px">ｽﾄﾗｸﾁｬｰ</div>
<svg class="a" style="left:224px;top:151px" width="8" height="10" viewBox="0 0 8 10"><path d="M2 0.5 H6 V5 H2 Z M4.7 0.5 V5" fill="none" stroke="#8a8a8a" stroke-width="1"/><path d="M5.3 0.5 V5" stroke="#8a8a8a" stroke-width="1.4"/><path d="M0.5 5.5 H7.5 M4 5.5 V9.5" stroke="#8a8a8a" stroke-width="1"/></svg>
<svg class="a" style="left:12px;top:173px" width="8" height="8" viewBox="0 0 8 8"><path d="M7 0.5 V7 H0.5 Z" fill="#555" stroke="#444" stroke-width="0.8"/></svg>
<svg class="a" style="left:25px;top:171px" width="13" height="13" viewBox="0 0 13 13"><rect x="0.5" y="0.5" width="12" height="12" fill="#fff" stroke="#b8b8b8" stroke-width="1"/><path d="M2.8 6.6 L5.3 9.2 L10.3 3.6" fill="none" stroke="#9a9a9a" stroke-width="1.3"/></svg>
<svg class="a" style="left:42px;top:169px" width="16" height="18" viewBox="0 0 16 18"><path d="M1.5 0.8 H9 L13 4.8 V16 H1.5 Z" fill="#fdfdff" stroke="#6a7a9a" stroke-width="1"/><path d="M9 0.8 V4.8 H13" fill="#dfe5f2" stroke="#6a7a9a" stroke-width="0.9"/><path d="M3 11 L9 8.5 L15.2 11 V14 L9.5 17 L3 14 Z" fill="#f6cc9c" stroke="#8a4a1a" stroke-width="0.9"/><path d="M3 11 L9.5 13.5 L15.2 11 M9.5 13.5 V17" fill="none" stroke="#8a4a1a" stroke-width="0.8"/></svg>
<div class="t" style="left:63px;top:172px;font-weight:bold;font-size:12px;letter-spacing:0.4px">test1*</div>
<div class="a" style="left:80px;top:185px;width:28px;height:16px;background:#ffe28a"></div>
<div class="a" style="left:80px;top:201px;width:28px;height:16px;background:#ffc95c"></div>
<svg class="a" style="left:44px;top:187px" width="13" height="13" viewBox="0 0 13 13"><rect x="0.5" y="0.5" width="12" height="12" fill="#fff" stroke="#8c8c8c" stroke-width="1"/><path d="M2.8 6.6 L5.3 9.2 L10.3 3.6" fill="none" stroke="#333" stroke-width="1.3"/></svg>
<svg class="a" style="left:62px;top:186px" width="12" height="14" viewBox="0 0 14 16"><path d="M1 4.5 L4.5 1 H13 V11.5 L9.5 15.5 H1 Z" fill="#7ee07e" stroke="#0f5a1f" stroke-width="1.2" stroke-linejoin="round"/><path d="M1 4.5 H9.5 V15.5 M9.5 4.5 L13 1" fill="none" stroke="#0f5a1f" stroke-width="1.1"/><path d="M1.6 5.1 H9 V15 H1.6 Z" fill="#b4f4a8"/><path d="M10 5 L12.5 2.4 V11.3 L10 14.3 Z" fill="#4cc04c"/></svg>
<div class="t" style="left:82px;top:188px;font-size:11.5px;letter-spacing:-0.2px">Solid</div>
<svg class="a" style="left:44px;top:203px" width="13" height="13" viewBox="0 0 13 13"><rect x="0.5" y="0.5" width="12" height="12" fill="#fff" stroke="#8c8c8c" stroke-width="1"/><path d="M2.8 6.6 L5.3 9.2 L10.3 3.6" fill="none" stroke="#333" stroke-width="1.3"/></svg>
<svg class="a" style="left:62px;top:202px" width="12" height="14" viewBox="0 0 14 16"><path d="M1 4.5 L4.5 1 H13 V11.5 L9.5 15.5 H1 Z" fill="#7ee07e" stroke="#0f5a1f" stroke-width="1.2" stroke-linejoin="round"/><path d="M1 4.5 H9.5 V15.5 M9.5 4.5 L13 1" fill="none" stroke="#0f5a1f" stroke-width="1.1"/><path d="M1.6 5.1 H9 V15 H1.6 Z" fill="#b4f4a8"/><path d="M10 5 L12.5 2.4 V11.3 L10 14.3 Z" fill="#4cc04c"/></svg>
<div class="t" style="left:82px;top:204px;font-size:11.5px;letter-spacing:-0.2px">Solid</div>
<svg class="a" style="left:32px;top:220px" width="6" height="10" viewBox="0 0 6 10"><path d="M0.7 0.8 L5 5 L0.7 9.2 Z" fill="#fff" stroke="#555" stroke-width="1"/></svg>
<svg class="a" style="left:44px;top:219px" width="13" height="13" viewBox="0 0 13 13"><rect x="0.5" y="0.5" width="12" height="12" fill="#fff" stroke="#999" stroke-width="1"/></svg>
<svg class="a" style="left:60px;top:218px" width="16" height="15" viewBox="0 0 16 15"><path d="M1 13.5 V2.5 Q1 1.5 2 1.5 H5.5 L7 3 H12.5 Q13.5 3 13.5 4 V6" fill="#efe2b8" stroke="#d8c898" stroke-width="0.9"/><path d="M1 13.5 L3 6 H15 L13 13.5 Z" fill="#f8eecb" stroke="#d8c898" stroke-width="0.9"/></svg>
<div class="t" style="left:82px;top:219.5px;font-style:italic;;font-size:13px;letter-spacing:0.50px">ｶｰﾌﾞ</div>
<div class="a" style="left:3px;top:393px;width:234px;height:20px;background:#f5f5fa"></div>
<div class="t" style="left:7px;top:396.5px;;font-size:13px;letter-spacing:-0.95px">ﾌﾟﾛﾊﾟﾃｨ</div>
<svg class="a" style="left:224px;top:398px" width="8" height="10" viewBox="0 0 8 10"><path d="M2 0.5 H6 V5 H2 Z M4.7 0.5 V5" fill="none" stroke="#8a8a8a" stroke-width="1"/><path d="M5.3 0.5 V5" stroke="#8a8a8a" stroke-width="1.4"/><path d="M0.5 5.5 H7.5 M4 5.5 V9.5" stroke="#8a8a8a" stroke-width="1"/></svg>
<div class="a" style="left:3px;top:413px;width:235px;height:199px;background:#fff;border:1px solid #9a9a9a"></div>
<div class="a" style="left:4px;top:414px;width:233px;height:16px;background:#dddde1"></div>
<div class="a" style="left:4px;top:478px;width:233px;height:16px;background:#dddde1"></div>
<div class="a" style="left:4px;top:430px;width:20px;height:112px;background:#dddde1"></div>
<div class="a" style="left:24px;top:494px;width:81px;height:16px;background:#e4e4e4"></div>
<div class="a" style="left:24px;top:445px;width:213px;height:1px;background:#e6e6e6"></div>
<div class="a" style="left:24px;top:461px;width:213px;height:1px;background:#e6e6e6"></div>
<div class="a" style="left:24px;top:509px;width:213px;height:1px;background:#e6e6e6"></div>
<div class="a" style="left:24px;top:525px;width:213px;height:1px;background:#e6e6e6"></div>
<div class="a" style="left:24px;top:541px;width:213px;height:1px;background:#e6e6e6"></div>
<div class="a" style="left:104px;top:430px;width:1px;height:48px;background:#e6e6e6"></div>
<div class="a" style="left:104px;top:494px;width:1px;height:48px;background:#e6e6e6"></div>
<svg class="a" style="left:8px;top:419px" width="9" height="6" viewBox="0 0 9 6"><path d="M1 1 L4.5 4.5 L8 1" fill="none" stroke="#444" stroke-width="1.7"/></svg>
<svg class="a" style="left:8px;top:435px" width="9" height="6" viewBox="0 0 9 6"><path d="M1 1 L4.5 4.5 L8 1" fill="none" stroke="#444" stroke-width="1.7"/></svg>
<svg class="a" style="left:8px;top:483px" width="9" height="6" viewBox="0 0 9 6"><path d="M1 1 L4.5 4.5 L8 1" fill="none" stroke="#444" stroke-width="1.7"/></svg>
<div class="t" style="left:27px;top:417px;font-weight:bold;letter-spacing:-2.2px">マテリアル</div>
<div class="t" style="left:27px;top:433px;letter-spacing:-2.2px">マテリアル名</div>
<div class="t" style="left:108px;top:433px;letter-spacing:-0.4px">不明な材質</div>
<div class="t" style="left:48px;top:449px;color:#7a7a7a">流体</div>
<div class="t" style="left:109px;top:450px;color:#7a7a7a;font-size:11px">False</div>
<div class="t" style="left:48px;top:465px;color:#7a7a7a">密度</div>
<div class="t" style="left:108px;top:465px;color:#7a7a7a;letter-spacing:-2px">なし</div>
<div class="t" style="left:27px;top:481px;font-weight:bold">表示</div>
<div class="a" style="left:24px;top:494px;width:81px;height:16px;overflow:hidden"><div class="t" style="left:4px;top:4px;font-size:11px;letter-spacing:-0.1px">Tessellation Quality</div></div>
<div class="t" style="left:109px;top:498px;font-size:11px">5</div>
<div class="t" style="left:27px;top:513px;letter-spacing:-3.2px">スタイル</div>
<div class="t" style="left:108px;top:513px;letter-spacing:-2.3px">色別<span style="letter-spacing:0;margin-left:2px">, </span>スタイル別</div>
<div class="t" style="left:27px;top:529px;color:#7a7a7a">色</div>
<div class="a" style="left:107px;top:527px;width:20px;height:14px;background:#ff8000;border:1px solid #222"></div>
<div class="t" style="left:135px;top:530px;color:#7a7a7a;font-size:11px;letter-spacing:-0.15px;width:102px;overflow:hidden">ARGB: 255, 255, 128,</div>
<div class="a" style="left:3px;top:612px;width:234px;height:25px;background:#f5f5fa"></div>
<div class="a" style="left:6px;top:612px;width:53px;height:22px;border-left:1px solid #5a7a9a;border-right:1px solid #5a7a9a;background:#eeeef2"></div>
<div class="t" style="left:11px;top:616.5px;color:#2d5b88;;font-size:13px;letter-spacing:-0.80px">ﾌﾟﾛﾊﾟﾃｨ</div>
<div class="t" style="left:65px;top:616.5px;;font-size:13px;letter-spacing:0.50px">ﾚｲﾔ</div>
<div class="a" style="left:3px;top:640px;width:234px;height:20px;background:#f5f5fa"></div>
<div class="t" style="left:7px;top:644px;letter-spacing:0px">ｵﾌﾟｼｮﾝ - 移動</div>
<svg class="a" style="left:224px;top:645px" width="8" height="10" viewBox="0 0 8 10"><path d="M2 0.5 H6 V5 H2 Z M4.7 0.5 V5" fill="none" stroke="#8a8a8a" stroke-width="1"/><path d="M5.3 0.5 V5" stroke="#8a8a8a" stroke-width="1.4"/><path d="M0.5 5.5 H7.5 M4 5.5 V9.5" stroke="#8a8a8a" stroke-width="1"/></svg>
<div class="a" style="left:3px;top:661px;width:234px;height:24px;background:#f5f5fa"></div>
<svg class="a" style="left:7px;top:665px" width="16" height="16" viewBox="0 0 16 16"><g transform="translate(8 8)"><circle r="5.4" fill="#f5f5fa" stroke="#333" stroke-width="1.2"/><path d="M-1.7 -5.2 L-1.4 -7.6 H1.4 L1.7 -5.2" transform="rotate(0)" fill="#f5f5fa" stroke="#333" stroke-width="1.1"/><path d="M-1.7 -5.2 L-1.4 -7.6 H1.4 L1.7 -5.2" transform="rotate(45)" fill="#f5f5fa" stroke="#333" stroke-width="1.1"/><path d="M-1.7 -5.2 L-1.4 -7.6 H1.4 L1.7 -5.2" transform="rotate(90)" fill="#f5f5fa" stroke="#333" stroke-width="1.1"/><path d="M-1.7 -5.2 L-1.4 -7.6 H1.4 L1.7 -5.2" transform="rotate(135)" fill="#f5f5fa" stroke="#333" stroke-width="1.1"/><path d="M-1.7 -5.2 L-1.4 -7.6 H1.4 L1.7 -5.2" transform="rotate(180)" fill="#f5f5fa" stroke="#333" stroke-width="1.1"/><path d="M-1.7 -5.2 L-1.4 -7.6 H1.4 L1.7 -5.2" transform="rotate(225)" fill="#f5f5fa" stroke="#333" stroke-width="1.1"/><path d="M-1.7 -5.2 L-1.4 -7.6 H1.4 L1.7 -5.2" transform="rotate(270)" fill="#f5f5fa" stroke="#333" stroke-width="1.1"/><path d="M-1.7 -5.2 L-1.4 -7.6 H1.4 L1.7 -5.2" transform="rotate(315)" fill="#f5f5fa" stroke="#333" stroke-width="1.1"/><circle r="2.4" fill="#fff" stroke="#333" stroke-width="1.1"/></g></svg>
<div class="t" style="left:29px;top:667px;">一般</div>
<svg class="a" style="left:12px;top:694px" width="16" height="17" viewBox="0 0 16 17"><path d="M0.8 15.5 L4 9 H15 L11.5 15.5 Z" fill="none" stroke="#9a9a9a" stroke-width="0.9"/><path d="M7.5 1 L4.5 10.5 H11 Z M7.5 5 V13" fill="none" stroke="#8a8a8a" stroke-width="0.9"/></svg>
<svg class="a" style="left:36px;top:694px" width="17" height="17" viewBox="0 0 17 17"><path d="M2.5 3 L13.5 14.5" stroke="#8a8a3a" stroke-width="0.9"/><path d="M1.5 15.5 L3 9.5 L4.8 11.3 L10.7 5.4 L9 3.6 L15 2 L13.5 8 L11.8 6.3 L5.9 12.2 L7.6 14 Z" fill="#8ac4f0" stroke="#3a6a9a" stroke-width="0.8" stroke-linejoin="round"/></svg>
<svg class="a" style="left:70px;top:695px" width="17" height="16" viewBox="0 0 17 16"><path d="M1.8 3 Q1.8 1 3 1 V14 M5.2 0.8 V15.2 M8.6 14 V1 Q9.8 1 9.8 3" stroke="#222" stroke-width="1.5" fill="none"/><path d="M9 4.5 H15.5" stroke="#222" stroke-width="1.2"/><circle cx="11.8" cy="4.6" r="2.3" fill="#e8ecff" stroke="#3a3a8a" stroke-width="0.9"/></svg>
<svg class="a" style="left:95px;top:695px" width="15" height="16" viewBox="0 0 15 16"><path d="M1.5 1.8 H13.5" stroke="#333" stroke-width="1.8"/><path d="M7.5 2 V4" stroke="#555" stroke-width="1.2"/><circle cx="7.5" cy="9" r="5" fill="#d4dcf8" stroke="#6a7ab8" stroke-width="1"/><path d="M7.5 9 L9.8 5.8" stroke="#d03a3a" stroke-width="1.1"/><path d="M4 15 H11" stroke="#444" stroke-width="1.4"/></svg>
<svg class="a" style="left:118px;top:695px" width="17" height="16" viewBox="0 0 17 16"><path d="M1 6 V14.5 M15.5 6 V14.5" stroke="#333" stroke-width="1"/><path d="M2 12.3 H14.5" stroke="#222" stroke-width="1"/><path d="M5 10.5 L1.8 12.3 L5 14.1 Z M11.5 10.5 L14.7 12.3 L11.5 14.1 Z" fill="#222"/><text x="8.3" y="7" font-size="7" text-anchor="middle" font-family="Liberation Sans,sans-serif" fill="#222" letter-spacing="1.2">XX</text></svg>
<svg class="a" style="left:142px;top:697px" width="16" height="11" viewBox="0 0 16 11"><rect x="0.5" y="0.5" width="15" height="10" fill="#fcfcee" stroke="#9a9a88" stroke-width="1"/><text x="8" y="8.6" font-size="8.5" font-weight="bold" text-anchor="middle" font-family="Liberation Sans,sans-serif" fill="#3a3a14" textLength="11.5" lengthAdjust="spacingAndGlyphs">XYZ</text></svg>
<svg class="a" style="left:12px;top:718px" width="13" height="13" viewBox="0 0 13 13"><rect x="0.5" y="0.5" width="12" height="12" fill="#fff" stroke="#7a7a7a" stroke-width="1"/></svg>
<div class="t" style="left:31px;top:720px;font-size:11px;letter-spacing:-0.2px">ﾊﾟﾀｰﾝを作成</div>
<svg class="a" style="left:12px;top:739px" width="13" height="13" viewBox="0 0 13 13"><rect x="0.5" y="0.5" width="12" height="12" fill="#fff" stroke="#7a7a7a" stroke-width="1"/></svg>
<div class="t" style="left:31px;top:741px;font-size:11px;letter-spacing:-0.6px">方向を維持</div>
<svg class="a" style="left:12px;top:759px" width="13" height="13" viewBox="0 0 13 13"><rect x="0.5" y="0.5" width="12" height="12" fill="#fff" stroke="#7a7a7a" stroke-width="1"/></svg>
<div class="t" style="left:31px;top:761px;font-size:11px;letter-spacing:-0.6px">最初に分離</div>
<svg class="a" style="left:12px;top:780px" width="13" height="13" viewBox="0 0 13 13"><rect x="0.5" y="0.5" width="12" height="12" fill="#2d5b88" stroke="#1f4a7a" stroke-width="1"/><path d="M2.8 6.6 L5.3 9.2 L10.3 3.6" fill="none" stroke="#fff" stroke-width="1.3"/></svg>
<div class="t" style="left:31px;top:782px;font-size:11px;letter-spacing:-0.45px">ｽｹｯﾁの接続を保持</div>
<div class="t" style="left:12px;top:804px;color:#7a7a7a;font-size:11px;letter-spacing:-1.2px">向きを記憶</div>
<svg class="a" style="left:72px;top:801px" width="12" height="14" viewBox="0 0 12 14"><path d="M2 1 V10.5" stroke="#2a8a3a" stroke-width="1.4"/><path d="M2 10.5 L11 13" stroke="#c83a3a" stroke-width="1.4"/><path d="M2 10.5 L8 5" stroke="#333" stroke-width="1.4"/></svg>
<div class="t" style="left:88px;top:804px;font-size:11px;letter-spacing:0.2px">ﾃﾞｨﾌｫﾙﾄ</div>
<svg class="a" style="left:132px;top:807px" width="6" height="4" viewBox="0 0 6 4"><path d="M0 0 H6 L3 3.4 Z" fill="#222"/></svg>
<div class="a" style="left:3px;top:960px;width:234px;height:24px;background:#f5f5fa"></div>
<div class="a" style="left:6px;top:962px;width:84px;height:20px;border-left:1px solid #5a7a9a;border-right:1px solid #5a7a9a"></div>
<div class="t" style="left:12px;top:964px;color:#2d5b88;font-size:12px;letter-spacing:0px">ｵﾌﾟｼｮﾝ - 移動</div>
<div class="t" style="left:96px;top:964px;">選択</div>

<!-- viewport -->
<div class="a" style="left:244px;top:149px;width:988px;height:808px;background:#fff;border:1px solid #a9a595;box-shadow:inset 0 0 0 1px #e6e4d6"></div>
<div class="t" style="left:257px;top:159px;font-size:13px;color:#333;letter-spacing:0px">基準をｸﾘｯｸし、選択されたﾊﾝﾄﾞﾙを回転してその基準に揃えます。選択したｵﾌﾞｼﾞｪｸﾄは回転します。</div>
<svg class="a" style="left:0px;top:0px" width="1264" height="1017" viewBox="0 0 1264 1017"><defs><clipPath id="cpY"><polygon points="599.6,308.5 775.6,358.8 775.6,593.3 717,576.7 731.5,639.3 644.1,614.1 658.2,559.4 599.6,542.2"/></clipPath><clipPath id="cpG"><polygon points="775.6,358.8 876.8,271.2 877,506 775.6,593.3"/></clipPath></defs><polygon points="673.3,841.2 673.3,548.4 707.3,519.1 728.8,558.8 749,541.2 741.4,489.6 775.5,460.7 832.7,477.1 871.6,546.7 906.2,556.3 892.5,494.3 950.8,511.1 951,803 849.1,891.1" fill="#ff7a00"/><polygon points="849.1,598.4 882.8,570.2 874.6,635.6 925.6,591.3 916.8,539.6 950.8,511.1 951,803 849.1,891.1" fill="#f27000"/><polyline points="673.3,624 673.3,841.2 849.1,891.1 951,803 950.8,511.1 892.5,494.3 906.2,556.3 871.6,546.7" fill="none" stroke="#5a2a00" stroke-width="0.9" /><polyline points="849.1,598.4 849.1,891.1" fill="none" stroke="#5a2a00" stroke-width="0.9" /><polyline points="789.9,582.1 849.1,598.4 882.8,570.2 874.6,635.6 925.6,591.3 916.8,539.6 950.8,511.1" fill="none" stroke="#5a2a00" stroke-width="0.9" /><polyline points="892.5,494.3 916.8,539.6" fill="none" stroke="#5a2a00" stroke-width="0.9" /><polyline points="906.2,556.3 925.6,591.3" fill="none" stroke="#5a2a00" stroke-width="0.9" /><polyline points="856.9,522.6 882.8,570.2" fill="none" stroke="#5a2a00" stroke-width="0.9" /><polyline points="789.9,582.1 804.8,644.5 768.2,634.2" fill="none" stroke="#5a2a00" stroke-width="0.9" /><polyline points="731.5,639.3 797.3,630.5" fill="none" stroke="#5a2a00" stroke-width="0.9" /><polygon points="628.2,551 625.1,579.4 653,575.3 657.5,559" fill="#e0e0e0" stroke="#333" stroke-width="0.8"/><polygon points="775.6,358.8 876.8,271.2 877,506 775.6,593.3" fill="#9d9d9d"/><g clip-path="url(#cpG)"><polygon points="775.5,460.7 832.7,477.1 856.9,522.6 840,600 775,600" fill="#c4875b"/><polyline points="775.5,460.7 832.7,477.1 856.9,522.6" fill="none" stroke="#9a8a80" stroke-width="0.8"/></g><polyline points="876.8,271.2 877,506 775.6,593.3" fill="none" stroke="#2a2a2a" stroke-width="0.9" /><polygon points="599.6,308.5 701.6,220.2 876.8,271.2 775.6,358.8" fill="#d2d2d2" stroke="#222" stroke-width="0.9" stroke-linejoin="round"/><polygon points="717,576.7 775.6,593.3 789.5,582.5 797.3,630.5 731.5,639.3" fill="#edb184"/><polygon points="775.6,593.3 789.9,582.1 792,596" fill="#b99a88"/><polyline points="717,576.7 727,621 797.3,630.5" fill="none" stroke="#b8a898" stroke-width="0.7" /><polyline points="775.6,593.3 797.3,630.5" fill="none" stroke="#b8a898" stroke-width="0.7" /><polyline points="731.5,639.3 797.3,630.5" fill="none" stroke="#5a2a00" stroke-width="0.9" /><polyline points="789.9,582.1 804.8,644.5" fill="none" stroke="#5a2a00" stroke-width="0.9" /><polygon points="599.6,308.5 775.6,358.8 775.6,593.3 717,576.7 731.5,639.3 644.1,614.1 658.2,559.4 599.6,542.2" fill="#edd75b"/><g clip-path="url(#cpY)"><polygon points="673.3,841.2 673.3,548.4 707.3,519.1 728.8,558.8 749,541.2 741.4,489.6 775.5,460.7 832.7,477.1 871.6,546.7 906.2,556.3 892.5,494.3 950.8,511.1 951,803 849.1,891.1" fill="#f4c432"/><polyline points="673.3,548.4 731.5,565 728.8,558.8" fill="none" stroke="#c9b860" stroke-width="0.7" /><polyline points="731.5,565 716.6,619.2" fill="none" stroke="#c9b860" stroke-width="0.7" /><polyline points="741.4,489.6 775.5,557" fill="none" stroke="#c9b860" stroke-width="0.7" /><polyline points="728.8,558.8 749,541.2" fill="none" stroke="#d9c050" stroke-width="0.7" /><polyline points="673.3,548.4 673.3,640" fill="none" stroke="#d9c050" stroke-width="0.7" /></g><polygon points="599.6,308.5 775.6,358.8 775.6,593.3 717,576.7 731.5,639.3 644.1,614.1 658.2,559.4 599.6,542.2" fill="none" stroke="#111" stroke-width="1.9" stroke-linejoin="miter"/></svg>
<svg class="a" style="left:0px;top:0px" width="1264" height="1017" viewBox="0 0 1264 1017"><path d="M802.5 684 L678.6 791.3" stroke="#ffb87a" stroke-width="1.8" opacity="0.6"/><defs><linearGradient id="gvz" x1="0" x2="1"><stop offset="0" stop-color="#bdb8e0"/><stop offset="0.5" stop-color="#a9a3d3"/><stop offset="1" stop-color="#8a84bc"/></linearGradient></defs><path d="M706.4 706.7 C697 716 698 734 722.8 743" fill="none" stroke="#a9a3d3" stroke-width="3.8" stroke-linecap="round"/><path d="M708.7 696 C712 674 730 664 752 665" fill="none" stroke="#c9adb9" stroke-width="3.8" stroke-linecap="round"/><path d="M752 713.5 L697 700.5 L696 704.5 L673.3 695.2 L695 708.5 L695.8 707 L752 720.5 Z" fill="#b3dcb3"/><path d="M673.3 695.2 L698.5 697.2 L695.5 709.5 Z" fill="#a9d6ab"/><circle cx="708" cy="703" r="3.3" fill="#bcc0c8"/><rect x="758" y="655" width="6.4" height="60" fill="url(#gvz)"/><path d="M761.2 632 L767.6 655.5 Q761.2 659 754.9 655.5 Z" fill="url(#gvz)"/><path d="M759 669.6 C742 690 732 716 730.8 742" fill="none" stroke="#a9d8aa" stroke-width="4" stroke-linecap="round"/><circle cx="753" cy="665.5" r="2.8" fill="#d2b9c3"/><circle cx="758.5" cy="670" r="2.8" fill="#b6e0b6"/><polygon points="751.5,714 763,718.5 763,731 751.5,726" fill="#3838c8"/><polygon points="763,718.5 771,712.5 771,725 763,731" fill="#2a2aa2"/><polygon points="751.5,714 759.5,709.5 771,712.5 763,718.5" fill="#5656e0"/><rect x="758" y="700" width="6.4" height="13.5" fill="url(#gvz)"/><path d="M759 719.5 L764.5 725.5 L731 753.5 L725.5 747 Z" fill="#e82626"/><path d="M762 722.5 L764.5 725.5 L733 752 L730.5 749 Z" fill="#c01a1a"/><path d="M710.4 764.2 L723.5 743.5 L734.5 756 Z" fill="#ee2e2e"/><path d="M710.4 764.2 L729.5 750 L734.5 756 Z" fill="#c81c1c"/><circle cx="723.5" cy="743.5" r="2.7" fill="#b7b2d8"/><circle cx="731" cy="741" r="2.7" fill="#b3dcb3"/><path d="M738 817 V790" stroke="#8a6a86" stroke-width="2"/><path d="M738 775.5 L741.2 792 H734.8 Z" fill="#3a6cf2"/><path d="M738 817 L755 803" stroke="#6f7a10" stroke-width="2.2"/><path d="M762.5 796.8 L757.5 806 L752 799.5 Z" fill="#1c7a1c"/><path d="M738 817 L766 824.5" stroke="#ff4a12" stroke-width="2.2"/><path d="M780 828.8 L763.5 828.3 L765.8 820.6 Z" fill="#f01616"/><circle cx="738" cy="817" r="1.8" fill="#9a9a9a"/><text x="738" y="769.5" font-size="10.5" font-weight="bold" text-anchor="middle" font-family="Liberation Sans,sans-serif" fill="#4a3a98">Z</text><text x="768.5" y="795.5" font-size="10.5" font-weight="bold" text-anchor="middle" font-family="Liberation Sans,sans-serif" fill="#5e9a18">Y</text><text x="790.3" y="836" font-size="10.5" font-weight="bold" text-anchor="middle" font-family="Liberation Sans,sans-serif" fill="#ff3a12">X</text><rect x="669.7" y="370.9" width="98.6" height="24" fill="#f4eaa8" stroke="#cfc56c" stroke-width="1"/><g stroke="#cbbf72" stroke-width="0.9" fill="none"><path d="M675.5 390.5 L680 384 H691 L686.5 390.5 Z"/><path d="M683.5 375.5 L680.5 385.5 H686.5 Z M683.5 380 V388"/></g><g stroke="#8a8a2c" stroke-width="1" fill="none"><path d="M699.5 380 V390.5 M715 380 V390.5"/><path d="M700.5 388 H714 M703.5 386 L700.5 388 L703.5 390 M711 386 L714 388 L711 390" stroke-width="1.1"/></g><text x="707.3" y="382.6" font-size="7.5" font-weight="bold" text-anchor="middle" font-family="Liberation Sans,sans-serif" fill="#8a8a2c" letter-spacing="0.8">XX</text><path d="M728.5 379 L733.5 375.5 L739 381 L734 384.5 Z" fill="#f0b45a" stroke="#c8923a" stroke-width="0.8"/><path d="M723.5 390 L729 383.5 L727.3 382 L733.5 380 L732.3 386.4 L730.7 385 L725.3 391.3 Z" fill="#a8dca8" stroke="#4a9a5a" stroke-width="0.8"/><rect x="747.3" y="377.6" width="14.4" height="10" fill="none" stroke="#8a8a2c" stroke-width="1"/><text x="754.5" y="385.7" font-size="8" font-weight="bold" text-anchor="middle" font-family="Liberation Sans,sans-serif" fill="#8a8a2c" textLength="11.5" lengthAdjust="spacingAndGlyphs">XYZ</text><path d="M669.3 440.4 V453.8 L672.6 450.9 L678.9 448.6 Z" fill="#fff" stroke="#111" stroke-width="1" stroke-linejoin="miter"/><g opacity="0.85"><path d="M685.2 450.5 L693.5 448.6 L695.3 456.5 L687 458.5 Z" fill="#eeb088" stroke="#d8946a" stroke-width="0.7"/><path d="M690 453 L692 462 L693.8 462 L692.5 468 L689.8 463.5 L691 463 Z" fill="#a8d8ee" stroke="#78b4d8" stroke-width="0.7"/><path d="M680.5 462.5 L689 461.5 L692 467.5 Z" fill="#e4ec9c" stroke="#c4d078" stroke-width="0.6"/></g></svg>
<div class="a" style="left:261px;top:181px;width:32px;height:32px;border:1px solid #858585;border-radius:6px;background:#fff"></div>
<div class="a" style="left:324px;top:181px;width:32px;height:32px;border:1px solid #858585;border-radius:6px;background:#fff"></div>
<div class="a" style="left:387px;top:181px;width:32px;height:32px;border:1px solid #858585;border-radius:6px;background:#fff"></div>
<div class="a" style="left:450px;top:181px;width:32px;height:32px;border:1px solid #858585;border-radius:6px;background:#fff"></div>
<div class="a" style="left:513px;top:181px;width:32px;height:32px;border:1px solid #858585;border-radius:6px;background:#fff"></div>
<div class="a" style="left:261px;top:221px;width:32px;height:32px;border:1px solid #858585;border-radius:6px;background:#fff"></div>
<div class="a" style="left:324px;top:221px;width:32px;height:32px;border:1px solid #858585;border-radius:6px;background:#fff"></div>
<div class="a" style="left:387px;top:221px;width:32px;height:32px;border:1px solid #858585;border-radius:6px;background:#fff"></div>
<div class="a" style="left:512px;top:223px;width:48px;height:48px;border:1.5px solid #5a5a5a;border-radius:9px;background:#fff"></div>
<svg class="a" style="left:261px;top:181px" width="32" height="32" viewBox="0 0 32 32"><defs><linearGradient id="gga" x1="0" y1="0" x2="1" y2="0.5"><stop offset="0" stop-color="#c8c8c8"/><stop offset="0.5" stop-color="#6a6a6a"/><stop offset="1" stop-color="#3a3a3a"/></linearGradient></defs><path d="M10 5.5 L23 15 L18 16 L21.5 23 L18.5 24.5 L15 17.5 L11 21 Z" fill="url(#gga)" stroke="#3a3030" stroke-width="0.8" stroke-linejoin="round"/></svg>
<svg class="a" style="left:324px;top:181px" width="32" height="32" viewBox="0 0 32 32"><path d="M4.8 25.8 L18.3 12.3 L15.2 9.5 L28 4 L22.8 17 L19.8 13.9 L6.3 27.3 Z" fill="#a8dcf2" stroke="#2a6a9a" stroke-width="0.9" stroke-linejoin="round"/></svg>
<svg class="a" style="left:387px;top:181px" width="32" height="32" viewBox="0 0 32 32"><path d="M3.5 25.5 C6 19 11 19.5 14 20.5 C19 22 21 18 22.5 14 L19.5 12.5 L29 4.5 L27.5 17 L25 15.2 C23 21 19 25.5 13 23.3 C10 22.2 7.5 22.5 6 27.5 Z" fill="#a8dcf2" stroke="#2a6a9a" stroke-width="0.9" stroke-linejoin="round"/></svg>
<svg class="a" style="left:450px;top:181px" width="32" height="32" viewBox="0 0 32 32"><path d="M7 25.5 L13.5 16 L20 17 L24 26 L17 28.5 Z" fill="#8adcd6" stroke="#2a8a8a" stroke-width="0.9" stroke-linejoin="round"/><path d="M13.5 16 L17 28.5 M20 17 L17 28.5" stroke="#2a8a8a" stroke-width="0.8" fill="none"/><path d="M3 8.5 L8 4.5 L28.5 10 V15 L23.5 18.5 L3 12.5 Z" fill="#e8b888" stroke="#8a5a3a" stroke-width="0.9" stroke-linejoin="round"/><path d="M3 8.5 L23.5 14 L28.5 10 M23.5 14 V18.5" fill="none" stroke="#8a5a3a" stroke-width="0.8"/><path d="M3 8.5 L8 4.5 L28.5 10 L23.5 14 Z" fill="#f4cfa8"/></svg>
<svg class="a" style="left:513px;top:181px" width="32" height="32" viewBox="0 0 32 32"><path d="M16 15 L22 12 L28 14.5 V24.5 L22.5 27.5 L16 25 Z" fill="#e8b888" stroke="#8a5a3a" stroke-width="0.9" stroke-linejoin="round"/><path d="M16 15 L22.5 17.5 L28 14.5 M22.5 17.5 V27.5" fill="none" stroke="#8a5a3a" stroke-width="0.8"/><path d="M17 18 L21.5 19.8 V25 L17 23.3 Z" fill="#dff0fb"/><path d="M4 5 L6 4 L12.5 10 L14 8.3 L21.5 21.5 L8.5 14.5 L10.3 12.5 Z" fill="#a8dcf2" stroke="#2a6a9a" stroke-width="0.9" stroke-linejoin="round"/></svg>
<svg class="a" style="left:261px;top:221px" width="32" height="32" viewBox="0 0 32 32"><path d="M5 5 L14.5 12 L10.8 12.8 L13.3 18 L11 19.2 L8.4 14 L5.4 16.6 Z" fill="url(#gga)" stroke="#3a3030" stroke-width="0.7"/><path d="M14 15 L19.5 12.5 L27 14.5 V25 L21.5 28.5 L14 26 Z" fill="none" stroke="#e03a3a" stroke-width="0.9"/><path d="M14 15 L21.5 17.5 L27 14.5 M21.5 17.5 V28.5 M19.5 12.5 V22.5 L14 26 M19.5 22.5 L27 25" stroke="#e03a3a" stroke-width="0.8" fill="none"/><path d="M15.5 17.5 L20.5 19 V25.5 L15.5 24 Z" fill="#e8b888"/><path d="M20.5 19 L25 16.8 V23 L20.5 25.5 Z" fill="#d89868"/></svg>
<svg class="a" style="left:324px;top:221px" width="32" height="32" viewBox="0 0 32 32"><path d="M9.3 18 L12.6 10 L11 9.4 L14.6 2.8 L15 10.8 L13.6 10.3 L10.3 18.4 Z" fill="#a8e8b0" stroke="#2a8a4a" stroke-width="0.8"/><path d="M10.5 22 L19.8 25.2 L20.4 23.6 L27.3 28.7 L18.6 28.4 L19.2 26.8 L10 23.5 Z" fill="#f0a8a8" stroke="#b03a4a" stroke-width="0.8"/><circle cx="7.5" cy="21.5" r="4.2" fill="#f0ee6a" stroke="#b8b41e" stroke-width="1"/></svg>
<svg class="a" style="left:387px;top:221px" width="32" height="32" viewBox="0 0 32 32"><path d="M14.6 17 V10 H12.4 L15.5 4 L18.6 10 H16.4 V17 Z" fill="#a8dcf2" stroke="#2a6a9a" stroke-width="0.9" stroke-linejoin="round"/><path d="M13.8 18.5 L8.6 21.8 L7.6 20 L3.5 26 L10.6 25.5 L9.6 23.6 L14.8 20.2 Z" fill="#a8dcf2" stroke="#2a6a9a" stroke-width="0.9" stroke-linejoin="round" stroke-dasharray="1.6 0.8"/><path d="M17.2 18.5 L22.4 21.8 L23.4 20 L27.5 26 L20.4 25.5 L21.4 23.6 L16.2 20.2 Z" fill="#a8dcf2" stroke="#2a6a9a" stroke-width="0.9" stroke-linejoin="round" stroke-dasharray="1.6 0.8"/></svg>
<svg class="a" style="left:512px;top:223px" width="48" height="48" viewBox="0 0 48 48"><path d="M18.5 8 L35.5 3 L40 17.5 L23 23 Z" fill="#f09848" stroke="#b8702a" stroke-width="1.1" stroke-linejoin="round"/><g stroke="#5aa05a" stroke-width="1.1"><path d="M29.5 7.5 V18.5 M24 13 H35 M25.6 9.1 L33.4 16.9 M33.4 9.1 L25.6 16.9"/></g><path d="M7 31.5 L27 34.5 L25.5 38 L36.5 43.5 L34 44.5 L22.5 40 L21 43 Z" fill="#e8ecd0" stroke="#c8ccb0" stroke-width="0.9"/><path d="M29.5 13.5 L38.5 28.5 L34.6 29.2 L38.3 43 L34.6 44 L30.6 30.2 L27.5 31 Z" fill="#c8b86a" stroke="#5a5a2a" stroke-width="0.9" stroke-linejoin="round"/><path d="M32.5 30 L36.3 43.5" stroke="#4a9a4a" stroke-width="1.8"/></svg>
<svg class="a" style="left:286px;top:850px" width="64" height="68" viewBox="0 0 64 68"><path d="M17.5 33 L17.5 20" stroke="#1a1ad8" stroke-width="1.4"/><path d="M17.5 17 L20 27 H15 Z" fill="#1a1ad8"/><text x="17.5" y="12.5" font-size="10.5" font-weight="bold" text-anchor="middle" font-family="Liberation Sans,sans-serif" fill="#1a1ad8">Z</text><path d="M4 42 L15 34.5 L30.5 38 L30.5 55 L21.5 64 L4 57.5 Z" fill="#dfe8f6" stroke="#a8b4cc" stroke-width="0.8"/><path d="M4 42 L21.5 47 L30.5 38 M21.5 47 V64" fill="none" stroke="#a8b4cc" stroke-width="0.8"/><path d="M4 42 L15 34.5 L30.5 38 L21.5 47 Z" fill="#edf2fb"/><path d="M21.5 47 L30.5 38 V55 L21.5 64 Z" fill="#cad6ea"/><ellipse cx="17.5" cy="40" rx="3.6" ry="2.8" fill="#1a1ad8"/><ellipse cx="12.5" cy="53.5" rx="3.5" ry="3.8" fill="#1a9a1a"/><ellipse cx="26.5" cy="51.5" rx="2.6" ry="3.8" fill="#f01a1a"/><text x="32.5" y="41" font-size="10.5" font-weight="bold" text-anchor="middle" font-family="Liberation Sans,sans-serif" fill="#1a7a1a">Y</text><path d="M33 53.5 L41 55.6" stroke="#f01a1a" stroke-width="1.4"/><path d="M49 57.5 L38.5 57.8 L40 52.6 Z" fill="#f01a1a"/><text x="56.5" y="63.5" font-size="10.5" font-weight="bold" text-anchor="middle" font-family="Liberation Sans,sans-serif" fill="#f01a1a">X</text></svg>
<div class="a" style="left:1151px;top:928px;width:68px;height:2px;background:#3a3ad0"></div>
<div class="t" style="left:1170px;top:933px;font-size:11px;color:#3a3ab8">20mm</div>

<!-- right strip / bottom -->
<div class="a" style="left:1235px;top:145px;width:27px;height:840px;background:#f0f0f0"></div>
<div class="a" style="left:1262px;top:145px;width:2px;height:840px;background:#f7f7f7"></div>
<div class="a" style="left:1235px;top:149px;width:20px;height:24px;background:#f5f5fa"></div>
<div class="a" style="left:1255px;top:148px;width:6px;height:62px;background:#c8c8c8"></div>
<div class="t" style="left:1241px;top:154px;writing-mode:vertical-rl;font-size:12px;letter-spacing:0.4px;line-height:12px;width:12px">ｸｲｯｸｶﾞｲﾄﾞ</div>
<div class="a" style="left:241px;top:960px;width:994px;height:1px;background:#6a6a6a"></div>
<div class="a" style="left:241px;top:960px;width:1px;height:25px;background:#6a6a6a"></div>
<div class="a" style="left:242px;top:961px;width:993px;height:24px;background:#f5f5fa"></div>
<div class="a" style="left:245px;top:961px;width:72px;height:21px;border:1px solid #3d6690;border-top:none;border-bottom:2px solid #2d5b88;background:#f5f5fa"></div>
<svg class="a" style="left:249px;top:963px" width="16" height="17" viewBox="0 0 16 17"><path d="M1.5 0.8 H8.5 L12 4.3 V15 H1.5 Z" fill="#fdfdff" stroke="#6a7a9a" stroke-width="1"/><path d="M8.5 0.8 V4.3 H12" fill="#dfe5f2" stroke="#6a7a9a" stroke-width="0.9"/><path d="M2.5 10.5 L8.5 8 L14.5 10.5 V13.5 L9 16.3 L2.5 13.5 Z" fill="#f6cc9c" stroke="#8a4a1a" stroke-width="0.9"/><path d="M2.5 10.5 L9 13 L14.5 10.5 M9 13 V16.3" fill="none" stroke="#8a4a1a" stroke-width="0.8"/></svg>
<div class="t" style="left:268px;top:965px;font-weight:bold;font-size:12px;color:#2d5b88;letter-spacing:0.2px">test1*</div>
<svg class="a" style="left:304px;top:967px" width="8" height="8" viewBox="0 0 8 8"><path d="M1 1 L7 7 M7 1 L1 7" stroke="#444" stroke-width="1.5"/></svg>
<svg class="a" style="left:1195px;top:966px" width="38" height="10" viewBox="0 0 38 10"><path d="M5.5 0.8 V9.2 L0.8 5 Z" fill="none" stroke="#333" stroke-width="1"/><path d="M15.5 0.8 V9.2 L20.2 5 Z" fill="none" stroke="#333" stroke-width="1"/><path d="M28.5 1 L36 8.5 M36 1 L28.5 8.5" stroke="#222" stroke-width="1.4"/></svg>
<div class="a" id="status"></div>
<div class="t w" style="left:9px;top:997px;font-size:10px;letter-spacing:-0.43px">基準をｸﾘｯｸし、選択されたﾊﾝﾄﾞﾙを回転してその基準に揃えます。選択したｵﾌﾞｼﾞｪｸﾄは回転します。</div>
<div class="a" style="left:524px;top:990px;width:1px;height:23px;background:#5f82a6"></div>
<div class="a" style="left:675px;top:990px;width:1px;height:23px;background:#5f82a6"></div>
<div class="a" style="left:738px;top:990px;width:1px;height:23px;background:#5f82a6"></div>
<div class="a" style="left:839px;top:990px;width:1px;height:23px;background:#5f82a6"></div>
<svg class="a" style="left:709px;top:994px" width="14" height="14" viewBox="0 0 14 14"><circle cx="7" cy="7" r="6.6" fill="#e8262a"/><path d="M7 2.8 V8.2" stroke="#fff" stroke-width="2"/><circle cx="7" cy="10.8" r="1.2" fill="#fff"/></svg>
<svg class="a" style="left:727px;top:999px" width="7" height="5" viewBox="0 0 7 5"><path d="M0 4.5 L3.5 0.5 L7 4.5 Z" fill="#fff"/></svg>
<div class="t w" style="left:783px;top:996px;font-size:11px">面</div>
<div class="t w" style="left:896px;top:996px;font-size:11px;letter-spacing:0.8px">1ﾎﾞﾃﾞｨ</div>
<svg class="a" style="left:992px;top:993px" width="10" height="18" viewBox="0 0 10 18"><path d="M0 6 L5 0.8 L10 6 Z M0 12 L5 17.2 L10 12 Z" fill="#6483a3"/></svg>
<svg class="a" style="left:1010px;top:993px" width="18" height="16" viewBox="0 0 18 16"><path d="M1 0.8 V12 L3.8 9.6 L5.8 14 L7.6 13.2 L5.6 8.9 L9.3 8.6 Z" fill="#fff" stroke="#111" stroke-width="0.9" stroke-linejoin="round"/><path d="M9.5 5 Q13 0.5 15.5 4 Q17 8 12 11" fill="none" stroke="#5ab0f0" stroke-width="1.8"/><path d="M8 3.5 L12 6.5 L8.5 8 Z" fill="#5ab0f0"/></svg>
<svg class="a" style="left:1036px;top:994px" width="11" height="15" viewBox="0 0 11 15"><path d="M1 0.8 V12 L3.8 9.6 L5.8 14 L7.6 13.2 L5.6 8.9 L9.3 8.6 Z" fill="#fff" stroke="#111" stroke-width="0.9" stroke-linejoin="round"/></svg>
<svg class="a" style="left:1053px;top:999px" width="7" height="5" viewBox="0 0 7 5"><path d="M0 4.5 L3.5 0.5 L7 4.5 Z" fill="#fff"/></svg>
<svg class="a" style="left:1069px;top:994px" width="17" height="14" viewBox="0 0 17 14"><rect x="1" y="1" width="15" height="12" fill="none" stroke="#5ab0f0" stroke-width="1.8" stroke-dasharray="3.4 2.2"/></svg>
<svg class="a" style="left:1089px;top:999px" width="7" height="5" viewBox="0 0 7 5"><path d="M0 4.5 L3.5 0.5 L7 4.5 Z" fill="#fff"/></svg>
<div class="a" style="left:1100px;top:990px;width:1px;height:23px;background:#5f82a6"></div>
<svg class="a" style="left:1104px;top:993px" width="19" height="18" viewBox="0 0 19 18"><g transform="rotate(-12 9.5 9)" fill="#5ab4f4"><path d="M9.5 0.4 L13 4.6 H10.8 Q10.9 6.6 9.6 7.9 Q11.6 7.4 14.4 7.6 V5.4 L18.6 9 L14.4 12.6 V10.4 Q12 10.3 10.6 9.4 Q11 11.4 10.8 13.4 H13 L9.5 17.6 L6 13.4 H8.2 Q8.2 11.4 9.4 10.1 Q7.4 10.6 4.6 10.4 V12.6 L0.4 9 L4.6 5.4 V7.6 Q7 7.7 8.4 8.6 Q8 6.6 8.2 4.6 H6 Z"/></g></svg>
<svg class="a" style="left:1125px;top:999px" width="7" height="5" viewBox="0 0 7 5"><path d="M0 4.5 L3.5 0.5 L7 4.5 Z" fill="#fff"/></svg>
<svg class="a" style="left:1140px;top:994px" width="16" height="16" viewBox="0 0 16 16"><path d="M8 0.6 L10.8 3.8 H9 V7 H12.2 V5.2 L15.4 8 L12.2 10.8 V9 H9 V12.2 H10.8 L8 15.4 L5.2 12.2 H7 V9 H3.8 V10.8 L0.6 8 L3.8 5.2 V7 H7 V3.8 H5.2 Z" fill="#5ab4f4"/></svg>
<svg class="a" style="left:1163px;top:993px" width="17" height="17" viewBox="0 0 17 17"><circle cx="6.5" cy="6.5" r="5" fill="#fff" stroke="#e8f2fa" stroke-width="1.6"/><path d="M10.5 10.5 L15.5 15.5" stroke="#5ab4f4" stroke-width="2.8" stroke-linecap="round"/></svg>
<svg class="a" style="left:1184px;top:999px" width="7" height="5" viewBox="0 0 7 5"><path d="M0 4.5 L3.5 0.5 L7 4.5 Z" fill="#fff"/></svg>
<svg class="a" style="left:1197px;top:995px" width="18" height="13" viewBox="0 0 18 13"><path d="M1.5 11.5 L3.8 4.8 L5.6 7 L15 1.6 L17 4.6 L7.6 9.8 L9.6 12 Z" fill="#5ab4f4"/></svg>
<svg class="a" style="left:1221px;top:995px" width="18" height="13" viewBox="0 0 18 13"><path d="M16.5 1.5 L14.2 8.2 L12.4 6 L3 11.4 L1 8.4 L10.4 3.2 L8.4 1 Z" fill="#5ab4f4"/></svg>

</body>
</html>
